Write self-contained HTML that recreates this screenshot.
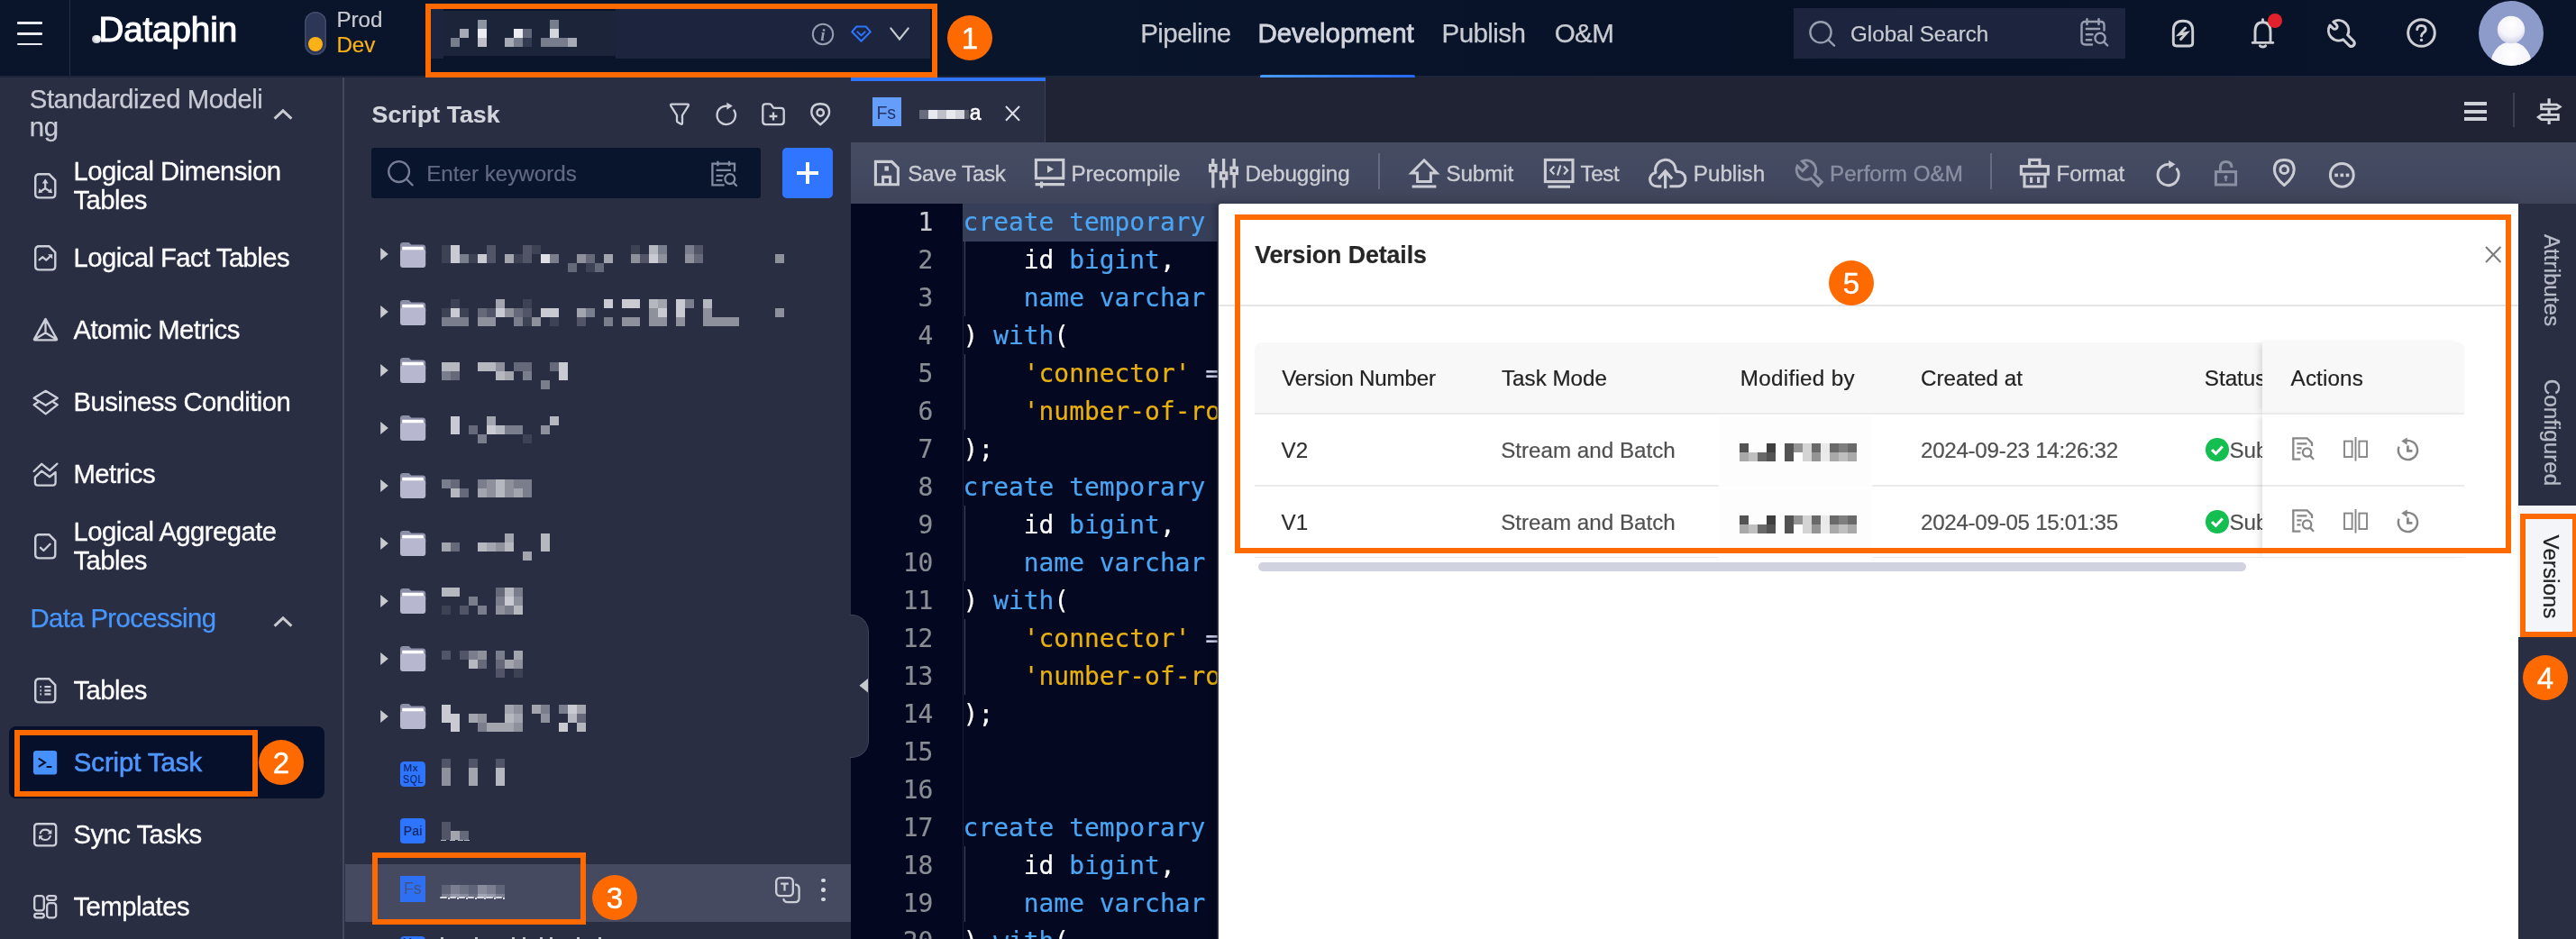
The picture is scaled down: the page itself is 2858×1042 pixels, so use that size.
<!DOCTYPE html>
<html lang="en"><head><meta charset="utf-8"><title>Dataphin - Script Task - Version Details</title>
<style>
html,body{margin:0;padding:0;}
body{width:2858px;height:1042px;overflow:hidden;position:relative;background:#2a2e43;font-family:"Liberation Sans",sans-serif;}
.t{position:absolute;white-space:nowrap;line-height:1;-webkit-text-stroke:0.2px;}
.r{position:absolute;}
.i{position:absolute;overflow:visible;}
.s{fill:none;stroke-linecap:round;stroke-linejoin:round;}
.clip{position:absolute;overflow:hidden;}
#app{position:absolute;left:0;top:0;width:2858px;height:1042px;will-change:transform;}
</style></head><body><div id="app">
<!-- header -->
<div class="r" style="left:0.0px;top:0.0px;width:2858.0px;height:85.0px;background:linear-gradient(90deg,#0a152c 0%,#09152b 40%,#071227 70%,#09142a 100%);"></div>
<div class="r" style="left:0.0px;top:84.0px;width:2858.0px;height:1.6px;background:#1c2439;"></div>
<div class="r" style="left:76.5px;top:0.0px;width:1.5px;height:85.0px;background:#232d48;"></div>
<div class="r" style="left:19.0px;top:24.2px;width:28.0px;height:2.6px;background:#e9eaf0;border-radius:1px;"></div>
<div class="r" style="left:19.0px;top:36.0px;width:28.0px;height:2.6px;background:#e9eaf0;border-radius:1px;"></div>
<div class="r" style="left:19.0px;top:47.6px;width:28.0px;height:2.6px;background:#e9eaf0;border-radius:1px;"></div>
<div class="r" style="left:102.3px;top:38.8px;width:9.4px;height:9.4px;background:radial-gradient(circle at 65% 35%,#ffffff 0%,#e4e5ea 45%,#9a9dab 100%);border-radius:50%;"></div>
<div class="t" style="left:109.4px;top:13.8px;font-size:38.6px;color:#ffffff;font-weight:normal;-webkit-text-stroke:1.1px #fff;letter-spacing:-0.1px;">Dataphin</div>
<div class="r" style="left:338.0px;top:13.0px;width:24.0px;height:47.5px;background:#2c3657;border-radius:12px;box-shadow:inset 0 0 0 1.5px #414b6b;"></div>
<div class="r" style="left:342.0px;top:41.4px;width:16.0px;height:16.0px;background:#fbb116;border-radius:50%;"></div>
<div class="t" style="left:373.4px;top:9.8px;font-size:24.2px;color:#c9cbd3;font-weight:normal;">Prod</div>
<div class="t" style="left:373.4px;top:37.6px;font-size:24.2px;color:#fbb116;font-weight:normal;">Dev</div>
<div class="r" style="left:476.0px;top:10.0px;width:556.0px;height:55.0px;background:#1c253d;"></div>
<div class="r" style="left:491.6px;top:10.0px;width:191.0px;height:2.0px;background:#0a152b;"></div>
<div class="r" style="left:491.6px;top:62.0px;width:191.0px;height:3.2px;background:#0a152b;"></div>
<div class="r" style="left:491.6px;top:12.0px;width:191.0px;height:50.0px;background:#1c2439;"></div>
<svg class="i" style="left:500.0px;top:22.0px;shape-rendering:crispEdges;" width="140" height="30" viewBox="0 0 140 30"><rect x="30" y="0" width="10.3" height="10.3" fill="rgb(143,148,162)"/><rect x="110" y="0" width="10.3" height="10.3" fill="rgb(120,125,141)"/><rect x="10" y="10" width="10.3" height="10.3" fill="rgb(166,170,182)"/><rect x="30" y="10" width="10.3" height="10.3" fill="rgb(235,236,242)"/><rect x="70" y="10" width="10.3" height="10.3" fill="rgb(235,236,242)"/><rect x="80" y="10" width="10.3" height="10.3" fill="rgb(97,103,121)"/><rect x="110" y="10" width="10.3" height="10.3" fill="rgb(212,214,222)"/><rect x="0" y="20" width="10.3" height="10.3" fill="rgb(120,125,141)"/><rect x="30" y="20" width="10.3" height="10.3" fill="rgb(189,192,202)"/><rect x="60" y="20" width="10.3" height="10.3" fill="rgb(166,170,182)"/><rect x="70" y="20" width="10.3" height="10.3" fill="rgb(120,125,141)"/><rect x="80" y="20" width="10.3" height="10.3" fill="rgb(51,59,81)"/><rect x="100" y="20" width="10.3" height="10.3" fill="rgb(120,125,141)"/><rect x="110" y="20" width="10.3" height="10.3" fill="rgb(120,125,141)"/><rect x="120" y="20" width="10.3" height="10.3" fill="rgb(120,125,141)"/><rect x="130" y="20" width="10.3" height="10.3" fill="rgb(166,170,182)"/></svg>
<svg class="i" style="left:900.0px;top:24.5px;" width="26" height="26" viewBox="0 0 26 26"><circle class="s" cx="13" cy="13" r="11.2" stroke="#989db0" stroke-width="2"/><text x="13" y="19.6" text-anchor="middle" font-family="Liberation Serif,serif" font-style="italic" font-weight="bold" font-size="19" fill="#989db0">i</text></svg>
<svg class="i" style="left:943.5px;top:27.5px;" width="23" height="19" viewBox="0 0 23 19"><path class="s" d="M6.2 1.5H16.8L21.8 7.3L11.5 17.8L1.2 7.3Z" stroke="#2b76ff" stroke-width="2"/><path class="s" d="M7.3 7.4L11.5 11.4L15.7 7.4" stroke="#2b76ff" stroke-width="2"/></svg>
<svg class="i" style="left:987.0px;top:29.5px;" width="22" height="15" viewBox="0 0 22 15"><path class="s" d="M1.3 1.3L11 13.5L20.7 1.3" stroke="#c9cbd3" stroke-width="2.1" style="stroke-linejoin:miter"/></svg>
<div class="t" style="left:1265.2px;top:22.3px;font-size:29.6px;color:#c9cbd3;font-weight:normal;letter-spacing:-0.6px;-webkit-text-stroke:0.25px #c9cbd3;">Pipeline</div>
<div class="t" style="left:1395.4px;top:22.3px;font-size:29.6px;color:#d3d5de;font-weight:normal;-webkit-text-stroke:0.8px #d3d5de;letter-spacing:-0.1px;">Development</div>
<div class="r" style="left:1398.0px;top:82.6px;width:172.0px;height:4.4px;background:linear-gradient(90deg,#4a9bff,#2468f2);border-radius:2.2px;"></div>
<div class="t" style="left:1599.5px;top:22.3px;font-size:29.6px;color:#c9cbd3;font-weight:normal;letter-spacing:-0.6px;-webkit-text-stroke:0.25px #c9cbd3;">Publish</div>
<div class="t" style="left:1724.8px;top:22.3px;font-size:29.6px;color:#c9cbd3;font-weight:normal;letter-spacing:-0.7px;-webkit-text-stroke:0.25px #c9cbd3;">O&amp;M</div>
<div class="r" style="left:1990.0px;top:9.0px;width:368.0px;height:56.0px;background:#1c253d;"></div>
<svg class="i" style="left:2006.0px;top:22.0px;" width="32" height="32" viewBox="0 0 32 32"><circle class="s" cx="14" cy="13.8" r="11.6" stroke="#989db0" stroke-width="2.4"/><path class="s" d="M22.4 22.2L29 28.6" stroke="#989db0" stroke-width="2.4"/></svg>
<div class="t" style="left:2053.0px;top:25.6px;font-size:24.2px;color:#c9cbd3;font-weight:normal;">Global Search</div>
<svg class="i" style="left:2308.0px;top:20.4px;" width="32" height="32" viewBox="0 0 32 32"><path class="s" d="M7.5 1.2V7M20.5 1.2V7" stroke="#989db0" stroke-width="2.6"/><path class="s" d="M13 29.5H5.5Q1.5 29.5 1.5 25.5V8Q1.5 4 5.5 4H22.5Q26.5 4 26.5 8V13.5" stroke="#989db0" stroke-width="2.4"/><path class="s" d="M6.8 12H21.2M6.8 18.3H13.5M6.8 24.3H12.2" stroke="#989db0" stroke-width="2.4"/><circle class="s" cx="22" cy="22.3" r="5.6" stroke="#989db0" stroke-width="2.4"/><path class="s" d="M26.3 26.7L30.2 30.5" stroke="#989db0" stroke-width="2.4"/></svg>
<svg class="i" style="left:2410.0px;top:21.8px;" width="24" height="30.4" viewBox="0 0 24 30.4"><path class="s" d="M1.3 25.6V12Q1.3 1.3 12 1.3Q22.7 1.3 22.7 12V25.6Q22.7 29 19.3 29H4.7Q1.3 29 1.3 25.6Z" stroke="#cecfd5" stroke-width="2.9"/><path class="s" d="M14.6 9L7.8 16.2L16 14.6L9.6 21.6" stroke="#cecfd5" stroke-width="2.9" style="stroke-linejoin:miter"/></svg>
<svg class="i" style="left:2497.0px;top:20.0px;" width="27" height="34" viewBox="0 0 27 34"><path class="s" d="M2.2 27.4H24.8M5 27V14.8Q5 4.8 13.5 4.8Q22 4.8 22 14.8V27M13.5 4.4V1.6M10.4 30.8Q13.5 33.4 16.6 30.8" stroke="#cecfd5" stroke-width="2.9"/></svg>
<div class="r" style="left:2516.0px;top:15.0px;width:16.0px;height:16.0px;background:#e2222b;border-radius:50%;"></div>
<svg class="i" style="left:2581.0px;top:20.0px;" width="35" height="34" viewBox="0 0 35 34"><path class="s" d="M7.8 4.2 L11.3 7.6 A2.7 2.7 0 0 1 7.4 11.5 L4.0 8.0 A11.2 11.2 0 0 0 18.6 23.8 L25.6 30.7 A3.5 3.5 0 0 0 30.5 25.8 L23.6 18.8 A11.2 11.2 0 0 0 7.8 4.2Z" stroke="#cecfd5" stroke-width="3"/></svg>
<svg class="i" style="left:2669.5px;top:20.2px;" width="33" height="33" viewBox="0 0 33 33"><circle class="s" cx="16.5" cy="16.5" r="14.8" stroke="#cecfd5" stroke-width="3"/><path class="s" d="M11.7 12.8Q11.9 8.4 16.5 8.4Q21.2 8.6 21.2 12.6Q21.2 15 18.6 16.4Q16.5 17.6 16.5 20" stroke="#cecfd5" stroke-width="2.9"/><circle cx="16.5" cy="24.4" r="1.7" fill="#cecfd5"/></svg>
<svg class="i" style="left:2750.0px;top:0.7px;" width="72" height="72" viewBox="0 0 72 72"><defs><clipPath id="avc"><circle cx="36" cy="36" r="36"/></clipPath><radialGradient id="avg" cx="50%" cy="30%" r="75%"><stop offset="0" stop-color="#ffffff"/><stop offset="0.6" stop-color="#f4f4fa"/><stop offset="1" stop-color="#c9cbe2"/></radialGradient></defs><circle cx="36" cy="36" r="36" fill="#8d9bcb"/><g clip-path="url(#avc)"><ellipse cx="36" cy="70" rx="22.5" ry="24.5" fill="url(#avg)"/><circle cx="36" cy="32" r="15.2" fill="url(#avg)"/></g></svg>
<!-- sidebar -->
<div class="r" style="left:0.0px;top:85.5px;width:381.0px;height:957.0px;background:#2a2e43;"></div>
<div class="r" style="left:380.2px;top:86.0px;width:1.8px;height:957.0px;background:#434860;"></div>
<div class="t" style="left:32.8px;top:94.7px;font-size:29.3px;color:#c8cad4;font-weight:normal;letter-spacing:-0.45px;-webkit-text-stroke:0.25px #c8cad4;">Standardized Modeli</div>
<div class="t" style="left:32.8px;top:126.1px;font-size:29.3px;color:#c8cad4;font-weight:normal;letter-spacing:-0.45px;-webkit-text-stroke:0.25px #c8cad4;">ng</div>
<svg class="i" style="left:303.2px;top:120.6px;" width="22" height="12.5" viewBox="0 0 22 12.5"><path class="s" d="M1.6 10.6L11 1.9L20.4 10.6" stroke="#c9cad0" stroke-width="3" style="stroke-linecap:butt;stroke-linejoin:miter"/></svg>
<div class="t" style="left:33.4px;top:670.6px;font-size:29.3px;color:#4696ff;font-weight:normal;letter-spacing:-0.6px;-webkit-text-stroke:0.25px #4696ff;">Data Processing</div>
<svg class="i" style="left:303.2px;top:683.6px;" width="22" height="12.5" viewBox="0 0 22 12.5"><path class="s" d="M1.6 10.6L11 1.9L20.4 10.6" stroke="#c9cad0" stroke-width="3" style="stroke-linecap:butt;stroke-linejoin:miter"/></svg>
<svg class="i" style="left:37.8px;top:191.7px;" width="24.5" height="28.6" viewBox="0 0 24.5 28.6"><path class="s" d="M1.2 5.4Q1.2 1.2 5.4 1.2H16.4L23.3 8.1V23.2Q23.3 27.4 19.1 27.4H5.4Q1.2 27.4 1.2 23.2Z" stroke="#cdcfd8" stroke-width="2.4"/><path class="s" d="M12.2 8.6V17L6.6 20.6M12.2 17L17.8 20.6" stroke="#cdcfd8" stroke-width="2.1"/><path d="M12.2 6.6L15.6 11.4H8.8Z M4.4 22.2L5.6 16.9L9.4 21.6Z M20 22.2L18.8 16.9L15 21.6Z" fill="#cdcfd8"/></svg>
<div class="t" style="left:81.5px;top:174.7px;font-size:29.3px;color:#ffffff;font-weight:normal;letter-spacing:-0.56px;-webkit-text-stroke:0.3px #ffffff;">Logical Dimension</div>
<div class="t" style="left:81.5px;top:206.7px;font-size:29.3px;color:#ffffff;font-weight:normal;letter-spacing:-0.56px;-webkit-text-stroke:0.3px #ffffff;">Tables</div>
<svg class="i" style="left:37.8px;top:271.8px;" width="24.5" height="28.6" viewBox="0 0 24.5 28.6"><path class="s" d="M1.2 5.4Q1.2 1.2 5.4 1.2H16.4L23.3 8.1V23.2Q23.3 27.4 19.1 27.4H5.4Q1.2 27.4 1.2 23.2Z" stroke="#cdcfd8" stroke-width="2.4"/><path class="s" d="M5.6 16.4L9.4 13.2L13.2 16.6L18 12.2" stroke="#cdcfd8" stroke-width="2.2"/><path d="M15 10.2H20.2V15.4Z" fill="#cdcfd8"/></svg>
<div class="t" style="left:81.5px;top:271.1px;font-size:29.3px;color:#ffffff;font-weight:normal;letter-spacing:-0.56px;-webkit-text-stroke:0.3px #ffffff;">Logical Fact Tables</div>
<svg class="i" style="left:35.5px;top:352.0px;" width="29" height="27" viewBox="0 0 29 27"><path class="s" d="M14.5 1.9L27 24.4Q27.4 25.4 26.2 25.4H2.8Q1.6 25.4 2 24.4ZM14.5 2.4V17.2L2.6 24.6M14.5 17.2L26.4 24.6" stroke="#cdcfd8" stroke-width="2.3"/></svg>
<div class="t" style="left:81.5px;top:351.1px;font-size:29.3px;color:#ffffff;font-weight:normal;letter-spacing:-0.56px;-webkit-text-stroke:0.3px #ffffff;">Atomic Metrics</div>
<svg class="i" style="left:35.5px;top:431.5px;" width="29.4" height="29.4" viewBox="0 0 29.4 29.4"><path class="s" d="M14.7 1.8L27.8 9.8L14.7 17.8L1.6 9.8ZM5.8 14.6L1.6 17.2L14.7 27.4L27.8 17.2L23.6 14.6" stroke="#cdcfd8" stroke-width="2.3"/></svg>
<div class="t" style="left:81.5px;top:431.1px;font-size:29.3px;color:#ffffff;font-weight:normal;letter-spacing:-0.56px;-webkit-text-stroke:0.3px #ffffff;">Business Condition</div>
<svg class="i" style="left:35.5px;top:512.5px;" width="29" height="27.5" viewBox="0 0 29 27.5"><path class="s" d="M1.6 10L10.2 1.8L19.2 9.2L27.4 1.6" stroke="#cdcfd8" stroke-width="2.3"/><path class="s" d="M2.9 16.6L10.2 9.6L19.2 16.2L25.6 11V22.6Q25.6 25.6 22.6 25.6H5.9Q2.9 25.6 2.9 22.6Z" stroke="#cdcfd8" stroke-width="2.3"/></svg>
<div class="t" style="left:81.5px;top:511.1px;font-size:29.3px;color:#ffffff;font-weight:normal;letter-spacing:-0.56px;-webkit-text-stroke:0.3px #ffffff;">Metrics</div>
<svg class="i" style="left:37.8px;top:591.8px;" width="24.5" height="28.6" viewBox="0 0 24.5 28.6"><path class="s" d="M1.2 5.4Q1.2 1.2 5.4 1.2H16.4L23.3 8.1V23.2Q23.3 27.4 19.1 27.4H5.4Q1.2 27.4 1.2 23.2Z" stroke="#cdcfd8" stroke-width="2.4"/><path class="s" d="M7 15.8L10.4 19L17.6 11.8" stroke="#cdcfd8" stroke-width="2.3"/></svg>
<div class="t" style="left:81.5px;top:574.9px;font-size:29.3px;color:#ffffff;font-weight:normal;letter-spacing:-0.56px;-webkit-text-stroke:0.3px #ffffff;">Logical Aggregate</div>
<div class="t" style="left:81.5px;top:606.9px;font-size:29.3px;color:#ffffff;font-weight:normal;letter-spacing:-0.56px;-webkit-text-stroke:0.3px #ffffff;">Tables</div>
<svg class="i" style="left:37.8px;top:751.8px;" width="24.5" height="28.6" viewBox="0 0 24.5 28.6"><path class="s" d="M1.2 5.4Q1.2 1.2 5.4 1.2H16.4L23.3 8.1V23.2Q23.3 27.4 19.1 27.4H5.4Q1.2 27.4 1.2 23.2Z" stroke="#cdcfd8" stroke-width="2.4"/><path class="s" d="M6.4 10.2H7.9M6.4 14.3H7.9M6.4 18.4H7.9M11.4 10.2H18.4M11.4 14.3H18.4M11.4 18.4H18.4" stroke="#cdcfd8" stroke-width="2.2" style="stroke-linecap:butt"/></svg>
<div class="t" style="left:81.5px;top:751.1px;font-size:29.3px;color:#ffffff;font-weight:normal;letter-spacing:-0.56px;-webkit-text-stroke:0.3px #ffffff;">Tables</div>
<div class="r" style="left:10.2px;top:806.0px;width:349.8px;height:79.6px;background:#07102a;border-radius:8px;"></div>
<svg class="i" style="left:37.0px;top:832.9px;" width="26.2" height="26.6" viewBox="0 0 26.2 26.6"><rect x="0" y="0" width="26.2" height="26.6" rx="3.4" fill="#4691ff"/><path class="s" d="M5.8 8.6L13 13.2L5.8 17.8M14.6 18H20.4" stroke="#07102a" stroke-width="2.1" style="stroke-linejoin:miter;stroke-linecap:butt"/></svg>
<div class="t" style="left:81.8px;top:831.1px;font-size:29.3px;color:#4d96ff;font-weight:normal;-webkit-text-stroke:0.65px #4d96ff;letter-spacing:-0.05px;">Script Task</div>
<svg class="i" style="left:36.9px;top:912.7px;" width="26.4" height="26.6" viewBox="0 0 26.4 26.6"><rect class="s" x="1.2" y="1.2" width="24" height="24.2" rx="3.2" stroke="#cdcfd8" stroke-width="2.4"/><path class="s" d="M7.6 11.6Q9 7.6 13.2 7.6Q16.6 7.6 18.4 10.4M18.8 15Q17.4 19 13.2 19Q9.8 19 8 16.2" stroke="#cdcfd8" stroke-width="2.1"/><path d="M20.4 7.6V12.4H15.6Z M6 19V14.2H10.8Z" fill="#cdcfd8"/></svg>
<div class="t" style="left:81.5px;top:911.1px;font-size:29.3px;color:#ffffff;font-weight:normal;letter-spacing:-0.56px;-webkit-text-stroke:0.3px #ffffff;">Sync Tasks</div>
<svg class="i" style="left:36.9px;top:992.8px;" width="26.4" height="26.6" viewBox="0 0 26.4 26.6"><rect class="s" x="1.2" y="1.2" width="10.6" height="16.2" rx="3" stroke="#cdcfd8" stroke-width="2.3"/><rect class="s" x="1.2" y="20.8" width="10.6" height="4.6" rx="2.3" stroke="#cdcfd8" stroke-width="2.3"/><rect class="s" x="15.2" y="1.2" width="10" height="4.6" rx="2.3" stroke="#cdcfd8" stroke-width="2.3"/><rect class="s" x="15.2" y="9.2" width="10" height="16.2" rx="3" stroke="#cdcfd8" stroke-width="2.3"/></svg>
<div class="t" style="left:81.5px;top:991.3px;font-size:29.3px;color:#ffffff;font-weight:normal;letter-spacing:-0.56px;-webkit-text-stroke:0.3px #ffffff;">Templates</div>
<!-- script task tree panel -->
<div class="t" style="left:412.6px;top:114.3px;font-size:26.7px;color:#d3d5dd;font-weight:bold;">Script Task</div>
<svg class="i" style="left:742.0px;top:113.6px;" width="24" height="25.6" viewBox="0 0 24 25.6"><path class="s" d="M3.4 1.6H20.6Q22.6 1.6 21.6 3.6L15 14V22.6Q15 24.6 13.2 23.6L9.8 21.6Q9 21.2 9 20.2V14L2.4 3.6Q1.4 1.6 3.4 1.6Z" stroke="#cdcfd8" stroke-width="2.3"/></svg>
<svg class="i" style="left:794.0px;top:113.0px;" width="24" height="27" viewBox="0 0 24 27"><path class="s" d="M15.2 5.2A10.2 10.2 0 1 0 20.4 9.4" stroke="#cdcfd8" stroke-width="2.3"/><path d="M12.4 0.8L18.8 4.6L12.4 8.8Z" fill="#cdcfd8"/></svg>
<svg class="i" style="left:845.0px;top:113.8px;" width="26" height="25.4" viewBox="0 0 26 25.4"><path class="s" d="M1.3 4.6Q1.3 1.3 4.6 1.3H8.6Q10.2 1.3 11 2.6L12.4 4.8Q13 5.8 14.4 5.8H21.4Q24.7 5.8 24.7 9.1V20.8Q24.7 24.1 21.4 24.1H4.6Q1.3 24.1 1.3 20.8Z" stroke="#cdcfd8" stroke-width="2.3"/><path class="s" d="M13 10.6V19.4M8.6 15H17.4" stroke="#cdcfd8" stroke-width="2.3" style="stroke-linecap:butt"/></svg>
<svg class="i" style="left:898.7px;top:113.8px;" width="22.4" height="25.6" viewBox="0 0 22.4 25.6"><path class="s" d="M11.2 24.2Q1.3 16.6 1.3 10.8Q1.3 1.3 11.2 1.3Q21.1 1.3 21.1 10.8Q21.1 16.6 11.2 24.2Z" stroke="#cdcfd8" stroke-width="2.4"/><circle class="s" cx="11.2" cy="11" r="3.7" stroke="#cdcfd8" stroke-width="2.4"/></svg>
<div class="r" style="left:412.0px;top:164.0px;width:432.0px;height:56.0px;background:#09152d;border-radius:3px;"></div>
<svg class="i" style="left:429.0px;top:176.5px;" width="32" height="32" viewBox="0 0 32 32"><circle class="s" cx="13.6" cy="13.6" r="11.4" stroke="#787e94" stroke-width="2.3"/><path class="s" d="M22 21.8L28.6 28.4" stroke="#787e94" stroke-width="2.3"/></svg>
<div class="t" style="left:473.2px;top:181.0px;font-size:24.2px;color:#626a82;font-weight:normal;">Enter keywords</div>
<svg class="i" style="left:789.4px;top:177.8px;" width="29" height="29" viewBox="0 0 29 29"><path class="s" d="M7.4 0.8V6.2M20 0.8V6.2" stroke="#828aa0" stroke-width="2.3" style="stroke-linecap:butt"/><path class="s" d="M14.6 27.4H1.4V3.6H26V12.6" stroke="#828aa0" stroke-width="2.3" style="stroke-linejoin:miter;stroke-linecap:butt"/><path class="s" d="M5.6 10.8H22M5.6 16.8H13.4M5.6 22.2H12.4" stroke="#828aa0" stroke-width="2.3" style="stroke-linecap:butt"/><circle class="s" cx="20.8" cy="20.6" r="5.4" stroke="#828aa0" stroke-width="2.3"/><path class="s" d="M24.8 24.8L28 28" stroke="#828aa0" stroke-width="2.3"/></svg>
<div class="r" style="left:868.0px;top:164.0px;width:56.0px;height:56.0px;background:#2f75ff;border-radius:5px;"></div>
<div class="r" style="left:884.0px;top:189.7px;width:24.4px;height:4.6px;background:#ffffff;"></div>
<div class="r" style="left:893.9px;top:179.8px;width:4.6px;height:24.4px;background:#ffffff;"></div>
<svg class="i" style="left:421.6px;top:275.4px;" width="9" height="14" viewBox="0 0 9 14"><path d="M0.2 0L8.8 7L0.2 14Z" fill="#c9cad0"/></svg>
<svg class="i" style="left:443.8px;top:268.8px;" width="28.2" height="28" viewBox="0 0 28.2 28"><path d="M0 3.2Q0 0 3.2 0H8.6Q10.2 0 11 1.2L12.2 2.6H25Q28.2 2.6 28.2 5.8V12H0Z" fill="#8e8fa8"/><path d="M2.2 4.8H25.6L26.4 9H2.2Z" fill="#ffffff"/><path d="M0 10.6Q0 8.2 2.4 8.2H25.8Q28.2 8.2 28.2 10.6V25Q28.2 28 25.2 28H3Q0 28 0 25Z" fill="#b7b8d0"/></svg>
<svg class="i" style="left:421.6px;top:339.4px;" width="9" height="14" viewBox="0 0 9 14"><path d="M0.2 0L8.8 7L0.2 14Z" fill="#c9cad0"/></svg>
<svg class="i" style="left:443.8px;top:332.8px;" width="28.2" height="28" viewBox="0 0 28.2 28"><path d="M0 3.2Q0 0 3.2 0H8.6Q10.2 0 11 1.2L12.2 2.6H25Q28.2 2.6 28.2 5.8V12H0Z" fill="#8e8fa8"/><path d="M2.2 4.8H25.6L26.4 9H2.2Z" fill="#ffffff"/><path d="M0 10.6Q0 8.2 2.4 8.2H25.8Q28.2 8.2 28.2 10.6V25Q28.2 28 25.2 28H3Q0 28 0 25Z" fill="#b7b8d0"/></svg>
<svg class="i" style="left:421.6px;top:403.5px;" width="9" height="14" viewBox="0 0 9 14"><path d="M0.2 0L8.8 7L0.2 14Z" fill="#c9cad0"/></svg>
<svg class="i" style="left:443.8px;top:396.9px;" width="28.2" height="28" viewBox="0 0 28.2 28"><path d="M0 3.2Q0 0 3.2 0H8.6Q10.2 0 11 1.2L12.2 2.6H25Q28.2 2.6 28.2 5.8V12H0Z" fill="#8e8fa8"/><path d="M2.2 4.8H25.6L26.4 9H2.2Z" fill="#ffffff"/><path d="M0 10.6Q0 8.2 2.4 8.2H25.8Q28.2 8.2 28.2 10.6V25Q28.2 28 25.2 28H3Q0 28 0 25Z" fill="#b7b8d0"/></svg>
<svg class="i" style="left:421.6px;top:467.5px;" width="9" height="14" viewBox="0 0 9 14"><path d="M0.2 0L8.8 7L0.2 14Z" fill="#c9cad0"/></svg>
<svg class="i" style="left:443.8px;top:460.9px;" width="28.2" height="28" viewBox="0 0 28.2 28"><path d="M0 3.2Q0 0 3.2 0H8.6Q10.2 0 11 1.2L12.2 2.6H25Q28.2 2.6 28.2 5.8V12H0Z" fill="#8e8fa8"/><path d="M2.2 4.8H25.6L26.4 9H2.2Z" fill="#ffffff"/><path d="M0 10.6Q0 8.2 2.4 8.2H25.8Q28.2 8.2 28.2 10.6V25Q28.2 28 25.2 28H3Q0 28 0 25Z" fill="#b7b8d0"/></svg>
<svg class="i" style="left:421.6px;top:531.5px;" width="9" height="14" viewBox="0 0 9 14"><path d="M0.2 0L8.8 7L0.2 14Z" fill="#c9cad0"/></svg>
<svg class="i" style="left:443.8px;top:524.9px;" width="28.2" height="28" viewBox="0 0 28.2 28"><path d="M0 3.2Q0 0 3.2 0H8.6Q10.2 0 11 1.2L12.2 2.6H25Q28.2 2.6 28.2 5.8V12H0Z" fill="#8e8fa8"/><path d="M2.2 4.8H25.6L26.4 9H2.2Z" fill="#ffffff"/><path d="M0 10.6Q0 8.2 2.4 8.2H25.8Q28.2 8.2 28.2 10.6V25Q28.2 28 25.2 28H3Q0 28 0 25Z" fill="#b7b8d0"/></svg>
<svg class="i" style="left:421.6px;top:595.5px;" width="9" height="14" viewBox="0 0 9 14"><path d="M0.2 0L8.8 7L0.2 14Z" fill="#c9cad0"/></svg>
<svg class="i" style="left:443.8px;top:588.9px;" width="28.2" height="28" viewBox="0 0 28.2 28"><path d="M0 3.2Q0 0 3.2 0H8.6Q10.2 0 11 1.2L12.2 2.6H25Q28.2 2.6 28.2 5.8V12H0Z" fill="#8e8fa8"/><path d="M2.2 4.8H25.6L26.4 9H2.2Z" fill="#ffffff"/><path d="M0 10.6Q0 8.2 2.4 8.2H25.8Q28.2 8.2 28.2 10.6V25Q28.2 28 25.2 28H3Q0 28 0 25Z" fill="#b7b8d0"/></svg>
<svg class="i" style="left:421.6px;top:659.6px;" width="9" height="14" viewBox="0 0 9 14"><path d="M0.2 0L8.8 7L0.2 14Z" fill="#c9cad0"/></svg>
<svg class="i" style="left:443.8px;top:653.0px;" width="28.2" height="28" viewBox="0 0 28.2 28"><path d="M0 3.2Q0 0 3.2 0H8.6Q10.2 0 11 1.2L12.2 2.6H25Q28.2 2.6 28.2 5.8V12H0Z" fill="#8e8fa8"/><path d="M2.2 4.8H25.6L26.4 9H2.2Z" fill="#ffffff"/><path d="M0 10.6Q0 8.2 2.4 8.2H25.8Q28.2 8.2 28.2 10.6V25Q28.2 28 25.2 28H3Q0 28 0 25Z" fill="#b7b8d0"/></svg>
<svg class="i" style="left:421.6px;top:723.6px;" width="9" height="14" viewBox="0 0 9 14"><path d="M0.2 0L8.8 7L0.2 14Z" fill="#c9cad0"/></svg>
<svg class="i" style="left:443.8px;top:717.0px;" width="28.2" height="28" viewBox="0 0 28.2 28"><path d="M0 3.2Q0 0 3.2 0H8.6Q10.2 0 11 1.2L12.2 2.6H25Q28.2 2.6 28.2 5.8V12H0Z" fill="#8e8fa8"/><path d="M2.2 4.8H25.6L26.4 9H2.2Z" fill="#ffffff"/><path d="M0 10.6Q0 8.2 2.4 8.2H25.8Q28.2 8.2 28.2 10.6V25Q28.2 28 25.2 28H3Q0 28 0 25Z" fill="#b7b8d0"/></svg>
<svg class="i" style="left:421.6px;top:787.6px;" width="9" height="14" viewBox="0 0 9 14"><path d="M0.2 0L8.8 7L0.2 14Z" fill="#c9cad0"/></svg>
<svg class="i" style="left:443.8px;top:781.0px;" width="28.2" height="28" viewBox="0 0 28.2 28"><path d="M0 3.2Q0 0 3.2 0H8.6Q10.2 0 11 1.2L12.2 2.6H25Q28.2 2.6 28.2 5.8V12H0Z" fill="#8e8fa8"/><path d="M2.2 4.8H25.6L26.4 9H2.2Z" fill="#ffffff"/><path d="M0 10.6Q0 8.2 2.4 8.2H25.8Q28.2 8.2 28.2 10.6V25Q28.2 28 25.2 28H3Q0 28 0 25Z" fill="#b7b8d0"/></svg>
<div class="r" style="left:383.0px;top:959.0px;width:561.0px;height:63.8px;background:#454a60;"></div>
<div class="r" style="left:444.2px;top:845.1px;width:28.2px;height:28.4px;background:#2d75ff;border-radius:4.5px;"><span class="t" style="left:3.2px;top:2.2px;font-size:11.5px;color:#10286a;letter-spacing:0.8px;">Mx</span><span class="t" style="left:2.4px;top:13.4px;font-size:13.5px;color:#10286a;transform:scaleX(0.78);transform-origin:0 0;letter-spacing:0.8px;">SQL</span></div>
<div class="r" style="left:444.2px;top:908.1px;width:28.2px;height:28.4px;background:#2d75ff;border-radius:4px;"><span class="t" style="left:3.6px;top:7.4px;font-size:14px;color:#14265a;letter-spacing:0.2px;">Pai</span></div>
<div class="r" style="left:444.2px;top:972.3px;width:28.2px;height:28.4px;background:#2e70f3;"><span class="t" style="left:3.9px;top:5.3px;font-size:17.6px;color:#46527e;-webkit-text-stroke:0;">Fs</span></div>
<div class="r" style="left:444.2px;top:1038.8px;width:28.2px;height:28.4px;background:#2d75ff;border-radius:4.5px;"><span class="t" style="left:2.6px;top:0.8px;font-size:12.5px;color:#0d1d4a;letter-spacing:0.6px;">Mx</span></div>
<svg class="i" style="left:490.0px;top:272.0px;shape-rendering:crispEdges;" width="380" height="30" viewBox="0 0 380 30"><rect x="0" y="0" width="10.3" height="10.3" fill="rgb(62,66,85)"/><rect x="10" y="0" width="10.3" height="10.3" fill="rgb(202,203,210)"/><rect x="50" y="0" width="10.3" height="10.3" fill="rgb(82,85,103)"/><rect x="90" y="0" width="10.3" height="10.3" fill="rgb(82,85,103)"/><rect x="100" y="0" width="10.3" height="10.3" fill="rgb(62,66,85)"/><rect x="210" y="0" width="10.3" height="10.3" fill="rgb(62,66,85)"/><rect x="230" y="0" width="10.3" height="10.3" fill="rgb(182,184,192)"/><rect x="240" y="0" width="10.3" height="10.3" fill="rgb(122,125,139)"/><rect x="270" y="0" width="10.3" height="10.3" fill="rgb(122,125,139)"/><rect x="280" y="0" width="10.3" height="10.3" fill="rgb(82,85,103)"/><rect x="0" y="10" width="10.3" height="10.3" fill="rgb(62,66,85)"/><rect x="10" y="10" width="10.3" height="10.3" fill="rgb(202,203,210)"/><rect x="20" y="10" width="10.3" height="10.3" fill="rgb(122,125,139)"/><rect x="30" y="10" width="10.3" height="10.3" fill="rgb(62,66,85)"/><rect x="40" y="10" width="10.3" height="10.3" fill="rgb(202,203,210)"/><rect x="50" y="10" width="10.3" height="10.3" fill="rgb(82,85,103)"/><rect x="70" y="10" width="10.3" height="10.3" fill="rgb(162,164,174)"/><rect x="80" y="10" width="10.3" height="10.3" fill="rgb(62,66,85)"/><rect x="90" y="10" width="10.3" height="10.3" fill="rgb(82,85,103)"/><rect x="110" y="10" width="10.3" height="10.3" fill="rgb(222,223,228)"/><rect x="120" y="10" width="10.3" height="10.3" fill="rgb(122,125,139)"/><rect x="150" y="10" width="10.3" height="10.3" fill="rgb(142,144,156)"/><rect x="160" y="10" width="10.3" height="10.3" fill="rgb(102,105,121)"/><rect x="180" y="10" width="10.3" height="10.3" fill="rgb(162,164,174)"/><rect x="210" y="10" width="10.3" height="10.3" fill="rgb(142,144,156)"/><rect x="220" y="10" width="10.3" height="10.3" fill="rgb(82,85,103)"/><rect x="230" y="10" width="10.3" height="10.3" fill="rgb(202,203,210)"/><rect x="240" y="10" width="10.3" height="10.3" fill="rgb(142,144,156)"/><rect x="270" y="10" width="10.3" height="10.3" fill="rgb(142,144,156)"/><rect x="280" y="10" width="10.3" height="10.3" fill="rgb(102,105,121)"/><rect x="370" y="10" width="10.3" height="10.3" fill="rgb(142,144,156)"/><rect x="140" y="20" width="10.3" height="10.3" fill="rgb(102,105,121)"/><rect x="160" y="20" width="10.3" height="10.3" fill="rgb(62,66,85)"/><rect x="170" y="20" width="10.3" height="10.3" fill="rgb(102,105,121)"/></svg>
<svg class="i" style="left:490.0px;top:332.0px;shape-rendering:crispEdges;" width="380" height="30" viewBox="0 0 380 30"><rect x="10" y="0" width="10.3" height="10.3" fill="rgb(62,66,85)"/><rect x="60" y="0" width="10.3" height="10.3" fill="rgb(162,164,174)"/><rect x="90" y="0" width="10.3" height="10.3" fill="rgb(62,66,85)"/><rect x="180" y="0" width="10.3" height="10.3" fill="rgb(202,203,210)"/><rect x="200" y="0" width="10.3" height="10.3" fill="rgb(202,203,210)"/><rect x="210" y="0" width="10.3" height="10.3" fill="rgb(202,203,210)"/><rect x="230" y="0" width="10.3" height="10.3" fill="rgb(182,184,192)"/><rect x="240" y="0" width="10.3" height="10.3" fill="rgb(162,164,174)"/><rect x="260" y="0" width="10.3" height="10.3" fill="rgb(202,203,210)"/><rect x="270" y="0" width="10.3" height="10.3" fill="rgb(122,125,139)"/><rect x="290" y="0" width="10.3" height="10.3" fill="rgb(182,184,192)"/><rect x="0" y="10" width="10.3" height="10.3" fill="rgb(62,66,85)"/><rect x="10" y="10" width="10.3" height="10.3" fill="rgb(202,203,210)"/><rect x="20" y="10" width="10.3" height="10.3" fill="rgb(62,66,85)"/><rect x="40" y="10" width="10.3" height="10.3" fill="rgb(102,105,121)"/><rect x="50" y="10" width="10.3" height="10.3" fill="rgb(82,85,103)"/><rect x="60" y="10" width="10.3" height="10.3" fill="rgb(202,203,210)"/><rect x="70" y="10" width="10.3" height="10.3" fill="rgb(142,144,156)"/><rect x="80" y="10" width="10.3" height="10.3" fill="rgb(102,105,121)"/><rect x="90" y="10" width="10.3" height="10.3" fill="rgb(82,85,103)"/><rect x="110" y="10" width="10.3" height="10.3" fill="rgb(202,203,210)"/><rect x="120" y="10" width="10.3" height="10.3" fill="rgb(202,203,210)"/><rect x="150" y="10" width="10.3" height="10.3" fill="rgb(162,164,174)"/><rect x="160" y="10" width="10.3" height="10.3" fill="rgb(122,125,139)"/><rect x="230" y="10" width="10.3" height="10.3" fill="rgb(142,144,156)"/><rect x="240" y="10" width="10.3" height="10.3" fill="rgb(202,203,210)"/><rect x="260" y="10" width="10.3" height="10.3" fill="rgb(202,203,210)"/><rect x="290" y="10" width="10.3" height="10.3" fill="rgb(142,144,156)"/><rect x="370" y="10" width="10.3" height="10.3" fill="rgb(142,144,156)"/><rect x="0" y="20" width="10.3" height="10.3" fill="rgb(122,125,139)"/><rect x="10" y="20" width="10.3" height="10.3" fill="rgb(122,125,139)"/><rect x="20" y="20" width="10.3" height="10.3" fill="rgb(122,125,139)"/><rect x="40" y="20" width="10.3" height="10.3" fill="rgb(142,144,156)"/><rect x="50" y="20" width="10.3" height="10.3" fill="rgb(142,144,156)"/><rect x="80" y="20" width="10.3" height="10.3" fill="rgb(122,125,139)"/><rect x="90" y="20" width="10.3" height="10.3" fill="rgb(62,66,85)"/><rect x="100" y="20" width="10.3" height="10.3" fill="rgb(142,144,156)"/><rect x="120" y="20" width="10.3" height="10.3" fill="rgb(62,66,85)"/><rect x="150" y="20" width="10.3" height="10.3" fill="rgb(82,85,103)"/><rect x="180" y="20" width="10.3" height="10.3" fill="rgb(122,125,139)"/><rect x="200" y="20" width="10.3" height="10.3" fill="rgb(142,144,156)"/><rect x="210" y="20" width="10.3" height="10.3" fill="rgb(142,144,156)"/><rect x="230" y="20" width="10.3" height="10.3" fill="rgb(142,144,156)"/><rect x="240" y="20" width="10.3" height="10.3" fill="rgb(142,144,156)"/><rect x="260" y="20" width="10.3" height="10.3" fill="rgb(142,144,156)"/><rect x="290" y="20" width="10.3" height="10.3" fill="rgb(142,144,156)"/><rect x="300" y="20" width="10.3" height="10.3" fill="rgb(142,144,156)"/><rect x="310" y="20" width="10.3" height="10.3" fill="rgb(142,144,156)"/><rect x="320" y="20" width="10.3" height="10.3" fill="rgb(142,144,156)"/></svg>
<svg class="i" style="left:490.0px;top:402.0px;shape-rendering:crispEdges;" width="140" height="30" viewBox="0 0 140 30"><rect x="0" y="0" width="10.3" height="10.3" fill="rgb(182,184,192)"/><rect x="10" y="0" width="10.3" height="10.3" fill="rgb(182,184,192)"/><rect x="40" y="0" width="10.3" height="10.3" fill="rgb(182,184,192)"/><rect x="50" y="0" width="10.3" height="10.3" fill="rgb(182,184,192)"/><rect x="60" y="0" width="10.3" height="10.3" fill="rgb(142,144,156)"/><rect x="80" y="0" width="10.3" height="10.3" fill="rgb(102,105,121)"/><rect x="90" y="0" width="10.3" height="10.3" fill="rgb(102,105,121)"/><rect x="120" y="0" width="10.3" height="10.3" fill="rgb(102,105,121)"/><rect x="130" y="0" width="10.3" height="10.3" fill="rgb(202,203,210)"/><rect x="0" y="10" width="10.3" height="10.3" fill="rgb(122,125,139)"/><rect x="10" y="10" width="10.3" height="10.3" fill="rgb(102,105,121)"/><rect x="60" y="10" width="10.3" height="10.3" fill="rgb(182,184,192)"/><rect x="70" y="10" width="10.3" height="10.3" fill="rgb(162,164,174)"/><rect x="90" y="10" width="10.3" height="10.3" fill="rgb(122,125,139)"/><rect x="130" y="10" width="10.3" height="10.3" fill="rgb(202,203,210)"/><rect x="110" y="20" width="10.3" height="10.3" fill="rgb(122,125,139)"/></svg>
<svg class="i" style="left:490.0px;top:462.0px;shape-rendering:crispEdges;" width="130" height="30" viewBox="0 0 130 30"><rect x="10" y="0" width="10.3" height="10.3" fill="rgb(202,203,210)"/><rect x="50" y="0" width="10.3" height="10.3" fill="rgb(162,164,174)"/><rect x="120" y="0" width="10.3" height="10.3" fill="rgb(182,184,192)"/><rect x="10" y="10" width="10.3" height="10.3" fill="rgb(202,203,210)"/><rect x="30" y="10" width="10.3" height="10.3" fill="rgb(102,105,121)"/><rect x="50" y="10" width="10.3" height="10.3" fill="rgb(202,203,210)"/><rect x="60" y="10" width="10.3" height="10.3" fill="rgb(182,184,192)"/><rect x="70" y="10" width="10.3" height="10.3" fill="rgb(122,125,139)"/><rect x="80" y="10" width="10.3" height="10.3" fill="rgb(122,125,139)"/><rect x="110" y="10" width="10.3" height="10.3" fill="rgb(142,144,156)"/><rect x="40" y="20" width="10.3" height="10.3" fill="rgb(122,125,139)"/><rect x="90" y="20" width="10.3" height="10.3" fill="rgb(62,66,85)"/></svg>
<svg class="i" style="left:490.0px;top:532.0px;shape-rendering:crispEdges;" width="100" height="20" viewBox="0 0 100 20"><rect x="0" y="0" width="10.3" height="10.3" fill="rgb(122,125,139)"/><rect x="10" y="0" width="10.3" height="10.3" fill="rgb(102,105,121)"/><rect x="40" y="0" width="10.3" height="10.3" fill="rgb(122,125,139)"/><rect x="50" y="0" width="10.3" height="10.3" fill="rgb(142,144,156)"/><rect x="60" y="0" width="10.3" height="10.3" fill="rgb(182,184,192)"/><rect x="70" y="0" width="10.3" height="10.3" fill="rgb(142,144,156)"/><rect x="80" y="0" width="10.3" height="10.3" fill="rgb(122,125,139)"/><rect x="90" y="0" width="10.3" height="10.3" fill="rgb(122,125,139)"/><rect x="10" y="10" width="10.3" height="10.3" fill="rgb(182,184,192)"/><rect x="20" y="10" width="10.3" height="10.3" fill="rgb(102,105,121)"/><rect x="40" y="10" width="10.3" height="10.3" fill="rgb(162,164,174)"/><rect x="50" y="10" width="10.3" height="10.3" fill="rgb(142,144,156)"/><rect x="60" y="10" width="10.3" height="10.3" fill="rgb(182,184,192)"/><rect x="70" y="10" width="10.3" height="10.3" fill="rgb(142,144,156)"/><rect x="80" y="10" width="10.3" height="10.3" fill="rgb(162,164,174)"/><rect x="90" y="10" width="10.3" height="10.3" fill="rgb(122,125,139)"/></svg>
<svg class="i" style="left:490.0px;top:592.0px;shape-rendering:crispEdges;" width="120" height="30" viewBox="0 0 120 30"><rect x="70" y="0" width="10.3" height="10.3" fill="rgb(162,164,174)"/><rect x="110" y="0" width="10.3" height="10.3" fill="rgb(182,184,192)"/><rect x="0" y="10" width="10.3" height="10.3" fill="rgb(162,164,174)"/><rect x="10" y="10" width="10.3" height="10.3" fill="rgb(102,105,121)"/><rect x="40" y="10" width="10.3" height="10.3" fill="rgb(182,184,192)"/><rect x="50" y="10" width="10.3" height="10.3" fill="rgb(162,164,174)"/><rect x="60" y="10" width="10.3" height="10.3" fill="rgb(142,144,156)"/><rect x="70" y="10" width="10.3" height="10.3" fill="rgb(182,184,192)"/><rect x="110" y="10" width="10.3" height="10.3" fill="rgb(182,184,192)"/><rect x="90" y="20" width="10.3" height="10.3" fill="rgb(162,164,174)"/></svg>
<svg class="i" style="left:490.0px;top:652.0px;shape-rendering:crispEdges;" width="90" height="30" viewBox="0 0 90 30"><rect x="0" y="0" width="10.3" height="10.3" fill="rgb(182,184,192)"/><rect x="10" y="0" width="10.3" height="10.3" fill="rgb(182,184,192)"/><rect x="60" y="0" width="10.3" height="10.3" fill="rgb(102,105,121)"/><rect x="70" y="0" width="10.3" height="10.3" fill="rgb(182,184,192)"/><rect x="80" y="0" width="10.3" height="10.3" fill="rgb(122,125,139)"/><rect x="30" y="10" width="10.3" height="10.3" fill="rgb(122,125,139)"/><rect x="60" y="10" width="10.3" height="10.3" fill="rgb(122,125,139)"/><rect x="70" y="10" width="10.3" height="10.3" fill="rgb(202,203,210)"/><rect x="80" y="10" width="10.3" height="10.3" fill="rgb(142,144,156)"/><rect x="0" y="20" width="10.3" height="10.3" fill="rgb(62,66,85)"/><rect x="20" y="20" width="10.3" height="10.3" fill="rgb(82,85,103)"/><rect x="40" y="20" width="10.3" height="10.3" fill="rgb(122,125,139)"/><rect x="60" y="20" width="10.3" height="10.3" fill="rgb(142,144,156)"/><rect x="70" y="20" width="10.3" height="10.3" fill="rgb(122,125,139)"/><rect x="80" y="20" width="10.3" height="10.3" fill="rgb(182,184,192)"/></svg>
<svg class="i" style="left:490.0px;top:722.0px;shape-rendering:crispEdges;" width="90" height="30" viewBox="0 0 90 30"><rect x="0" y="0" width="10.3" height="10.3" fill="rgb(82,85,103)"/><rect x="20" y="0" width="10.3" height="10.3" fill="rgb(82,85,103)"/><rect x="30" y="0" width="10.3" height="10.3" fill="rgb(122,125,139)"/><rect x="40" y="0" width="10.3" height="10.3" fill="rgb(142,144,156)"/><rect x="60" y="0" width="10.3" height="10.3" fill="rgb(122,125,139)"/><rect x="80" y="0" width="10.3" height="10.3" fill="rgb(162,164,174)"/><rect x="30" y="10" width="10.3" height="10.3" fill="rgb(182,184,192)"/><rect x="40" y="10" width="10.3" height="10.3" fill="rgb(102,105,121)"/><rect x="60" y="10" width="10.3" height="10.3" fill="rgb(102,105,121)"/><rect x="70" y="10" width="10.3" height="10.3" fill="rgb(162,164,174)"/><rect x="80" y="10" width="10.3" height="10.3" fill="rgb(142,144,156)"/><rect x="60" y="20" width="10.3" height="10.3" fill="rgb(82,85,103)"/><rect x="80" y="20" width="10.3" height="10.3" fill="rgb(62,66,85)"/></svg>
<svg class="i" style="left:490.0px;top:782.0px;shape-rendering:crispEdges;" width="160" height="30" viewBox="0 0 160 30"><rect x="0" y="0" width="10.3" height="10.3" fill="rgb(202,203,210)"/><rect x="70" y="0" width="10.3" height="10.3" fill="rgb(162,164,174)"/><rect x="80" y="0" width="10.3" height="10.3" fill="rgb(142,144,156)"/><rect x="100" y="0" width="10.3" height="10.3" fill="rgb(162,164,174)"/><rect x="110" y="0" width="10.3" height="10.3" fill="rgb(122,125,139)"/><rect x="130" y="0" width="10.3" height="10.3" fill="rgb(122,125,139)"/><rect x="140" y="0" width="10.3" height="10.3" fill="rgb(202,203,210)"/><rect x="150" y="0" width="10.3" height="10.3" fill="rgb(162,164,174)"/><rect x="0" y="10" width="10.3" height="10.3" fill="rgb(202,203,210)"/><rect x="10" y="10" width="10.3" height="10.3" fill="rgb(202,203,210)"/><rect x="30" y="10" width="10.3" height="10.3" fill="rgb(162,164,174)"/><rect x="40" y="10" width="10.3" height="10.3" fill="rgb(142,144,156)"/><rect x="70" y="10" width="10.3" height="10.3" fill="rgb(182,184,192)"/><rect x="80" y="10" width="10.3" height="10.3" fill="rgb(162,164,174)"/><rect x="110" y="10" width="10.3" height="10.3" fill="rgb(142,144,156)"/><rect x="140" y="10" width="10.3" height="10.3" fill="rgb(182,184,192)"/><rect x="150" y="10" width="10.3" height="10.3" fill="rgb(102,105,121)"/><rect x="10" y="20" width="10.3" height="10.3" fill="rgb(202,203,210)"/><rect x="40" y="20" width="10.3" height="10.3" fill="rgb(122,125,139)"/><rect x="50" y="20" width="10.3" height="10.3" fill="rgb(162,164,174)"/><rect x="60" y="20" width="10.3" height="10.3" fill="rgb(162,164,174)"/><rect x="70" y="20" width="10.3" height="10.3" fill="rgb(162,164,174)"/><rect x="80" y="20" width="10.3" height="10.3" fill="rgb(142,144,156)"/><rect x="130" y="20" width="10.3" height="10.3" fill="rgb(202,203,210)"/><rect x="150" y="20" width="10.3" height="10.3" fill="rgb(182,184,192)"/></svg>
<svg class="i" style="left:490.0px;top:842.0px;shape-rendering:crispEdges;" width="70" height="30" viewBox="0 0 70 30"><rect x="0" y="0" width="10.3" height="10.3" fill="rgb(82,85,103)"/><rect x="30" y="0" width="10.3" height="10.3" fill="rgb(82,85,103)"/><rect x="60" y="0" width="10.3" height="10.3" fill="rgb(82,85,103)"/><rect x="0" y="10" width="10.3" height="10.3" fill="rgb(142,144,156)"/><rect x="30" y="10" width="10.3" height="10.3" fill="rgb(162,164,174)"/><rect x="60" y="10" width="10.3" height="10.3" fill="rgb(182,184,192)"/><rect x="0" y="20" width="10.3" height="10.3" fill="rgb(142,144,156)"/><rect x="30" y="20" width="10.3" height="10.3" fill="rgb(162,164,174)"/><rect x="60" y="20" width="10.3" height="10.3" fill="rgb(182,184,192)"/></svg>
<svg class="i" style="left:490.0px;top:912.0px;shape-rendering:crispEdges;" width="30" height="20" viewBox="0 0 30 20"><rect x="0" y="0" width="10.3" height="10.3" fill="rgb(82,85,103)"/><rect x="0" y="10" width="10.3" height="10.3" fill="rgb(82,85,103)"/><rect x="10" y="10" width="10.3" height="10.3" fill="rgb(162,164,174)"/><rect x="20" y="10" width="10.3" height="10.3" fill="rgb(102,105,121)"/></svg>
<div class="r" style="left:489.0px;top:931.6px;width:5.5px;height:1.6px;background:#b9bbc6;"></div>
<div class="r" style="left:499.0px;top:931.6px;width:5.5px;height:1.6px;background:#b9bbc6;"></div>
<div class="r" style="left:508.0px;top:931.6px;width:5.5px;height:1.6px;background:#b9bbc6;"></div>
<div class="r" style="left:515.0px;top:931.6px;width:5.5px;height:1.6px;background:#b9bbc6;"></div>
<svg class="i" style="left:490.0px;top:982.0px;shape-rendering:crispEdges;" width="70" height="9.8" viewBox="0 0 70 9.8"><rect x="0" y="0" width="10.3" height="10.1" fill="rgb(96,100,120)"/><rect x="10" y="0" width="10.3" height="10.1" fill="rgb(123,126,144)"/><rect x="20" y="0" width="10.3" height="10.1" fill="rgb(109,113,132)"/><rect x="30" y="0" width="10.3" height="10.1" fill="rgb(96,100,120)"/><rect x="40" y="0" width="10.3" height="10.1" fill="rgb(136,140,157)"/><rect x="50" y="0" width="10.3" height="10.1" fill="rgb(123,126,144)"/><rect x="60" y="0" width="10.3" height="10.1" fill="rgb(96,100,120)"/></svg>
<svg class="i" style="left:490.0px;top:991.8px;shape-rendering:crispEdges;" width="70" height="3.6" viewBox="0 0 70 3.6"><rect x="0" y="0" width="10.3" height="3.9" fill="rgb(123,126,144)"/><rect x="10" y="0" width="10.3" height="3.9" fill="rgb(150,153,169)"/><rect x="20" y="0" width="10.3" height="3.9" fill="rgb(136,140,157)"/><rect x="30" y="0" width="10.3" height="3.9" fill="rgb(109,113,132)"/><rect x="40" y="0" width="10.3" height="3.9" fill="rgb(163,166,181)"/><rect x="50" y="0" width="10.3" height="3.9" fill="rgb(150,153,169)"/><rect x="60" y="0" width="10.3" height="3.9" fill="rgb(123,126,144)"/></svg>
<div class="r" style="left:488.4px;top:995.0px;width:7.4px;height:2.2px;background:#d6d8e0;border-radius:1px;"></div>
<div class="r" style="left:496.6px;top:996.4px;width:2.0px;height:1.8px;background:#d6d8e0;"></div>
<div class="r" style="left:498.6px;top:995.0px;width:7.4px;height:2.2px;background:#d6d8e0;border-radius:1px;"></div>
<div class="r" style="left:506.8px;top:996.4px;width:2.0px;height:1.8px;background:#d6d8e0;"></div>
<div class="r" style="left:508.8px;top:995.0px;width:7.4px;height:2.2px;background:#d6d8e0;border-radius:1px;"></div>
<div class="r" style="left:517.0px;top:996.4px;width:2.0px;height:1.8px;background:#d6d8e0;"></div>
<div class="r" style="left:519.0px;top:995.0px;width:7.4px;height:2.2px;background:#d6d8e0;border-radius:1px;"></div>
<div class="r" style="left:527.2px;top:996.4px;width:2.0px;height:1.8px;background:#d6d8e0;"></div>
<div class="r" style="left:529.2px;top:995.0px;width:7.4px;height:2.2px;background:#d6d8e0;border-radius:1px;"></div>
<div class="r" style="left:537.4px;top:996.4px;width:2.0px;height:1.8px;background:#d6d8e0;"></div>
<div class="r" style="left:539.4px;top:995.0px;width:7.4px;height:2.2px;background:#d6d8e0;border-radius:1px;"></div>
<div class="r" style="left:547.6px;top:996.4px;width:2.0px;height:1.8px;background:#d6d8e0;"></div>
<div class="r" style="left:549.6px;top:995.0px;width:7.4px;height:2.2px;background:#d6d8e0;border-radius:1px;"></div>
<div class="r" style="left:557.8px;top:996.4px;width:2.0px;height:1.8px;background:#d6d8e0;"></div>
<div class="r" style="left:489.0px;top:1040.0px;width:3.0px;height:2.0px;background:#c3c5cf;"></div>
<div class="r" style="left:527.0px;top:1040.0px;width:3.0px;height:2.0px;background:#c3c5cf;"></div>
<div class="r" style="left:568.0px;top:1040.0px;width:3.0px;height:2.0px;background:#c3c5cf;"></div>
<div class="r" style="left:580.0px;top:1040.0px;width:3.0px;height:2.0px;background:#c3c5cf;"></div>
<div class="r" style="left:599.0px;top:1040.0px;width:3.0px;height:2.0px;background:#c3c5cf;"></div>
<div class="r" style="left:610.0px;top:1040.0px;width:3.0px;height:2.0px;background:#c3c5cf;"></div>
<div class="r" style="left:640.0px;top:1040.0px;width:3.0px;height:2.0px;background:#c3c5cf;"></div>
<div class="r" style="left:664.0px;top:1040.0px;width:3.0px;height:2.0px;background:#c3c5cf;"></div>
<svg class="i" style="left:860.4px;top:973.4px;" width="28" height="29.6" viewBox="0 0 28 29.6"><rect class="s" x="1.2" y="1.2" width="18.6" height="20" rx="4.2" stroke="#cdcfd8" stroke-width="2.3"/><path class="s" d="M23 8.6Q26.6 9.4 26.6 13V23.6Q26.6 28.2 22 28.2H13.6Q10.4 28.2 9.4 25" stroke="#cdcfd8" stroke-width="2.3"/><path class="s" d="M6.2 7.6H14.8M10.5 7.6V15.6" stroke="#cdcfd8" stroke-width="2.2" style="stroke-linecap:butt"/></svg>
<div class="r" style="left:911.4px;top:974.7px;width:4.6px;height:4.6px;background:#d6d8e0;border-radius:50%;"></div>
<div class="r" style="left:911.4px;top:985.1px;width:4.6px;height:4.6px;background:#d6d8e0;border-radius:50%;"></div>
<div class="r" style="left:911.4px;top:995.5px;width:4.6px;height:4.6px;background:#d6d8e0;border-radius:50%;"></div>
<!-- tab bar -->
<div class="r" style="left:944.0px;top:85.5px;width:1914.0px;height:72.5px;background:#202333;"></div>
<div class="r" style="left:944.0px;top:85.5px;width:216.0px;height:72.5px;background:#2a2e43;"></div>
<div class="r" style="left:1158.6px;top:90.0px;width:1.5px;height:68.0px;background:#3c4157;"></div>
<div class="r" style="left:944.0px;top:85.6px;width:216.0px;height:4.2px;background:#2f75ff;"></div>
<div class="r" style="left:967.8px;top:107.8px;width:32.5px;height:32.6px;background:#659efa;"><span class="t" style="left:4.6px;top:7.8px;font-size:19.6px;color:#243465;-webkit-text-stroke:0;">Fs</span></div>
<svg class="i" style="left:1020.0px;top:122.3px;shape-rendering:crispEdges;" width="60" height="9.8" viewBox="0 0 60 9.8"><rect x="0" y="0" width="10.3" height="10.1" fill="rgb(105,108,124)"/><rect x="10" y="0" width="10.3" height="10.1" fill="rgb(232,233,238)"/><rect x="20" y="0" width="10.3" height="10.1" fill="rgb(190,191,200)"/><rect x="30" y="0" width="10.3" height="10.1" fill="rgb(232,233,238)"/><rect x="40" y="0" width="10.3" height="10.1" fill="rgb(211,212,219)"/><rect x="50" y="0" width="10.3" height="10.1" fill="rgb(84,88,105)"/></svg>
<div class="r" style="left:1075.0px;top:122.3px;width:1.5px;height:9.8px;background:#2a2e43;"></div>
<div class="t" style="left:1075.8px;top:114.3px;font-size:23.0px;color:#ffffff;font-weight:normal;-webkit-text-stroke:0.5px #fff;">a</div>
<svg class="i" style="left:1115.4px;top:117.1px;" width="17" height="17.8" viewBox="0 0 17 17.8"><path class="s" d="M1 1L16 16.8M16 1L1 16.8" stroke="#dcdee6" stroke-width="2" style="stroke-linecap:butt"/></svg>
<div class="r" style="left:2734.0px;top:113.4px;width:25.0px;height:4.0px;background:#d0d2da;"></div>
<div class="r" style="left:2734.0px;top:121.5px;width:25.0px;height:4.0px;background:#d0d2da;"></div>
<div class="r" style="left:2734.0px;top:129.6px;width:25.0px;height:4.0px;background:#d0d2da;"></div>
<div class="r" style="left:2788.4px;top:102.6px;width:1.5px;height:38.6px;background:#3a3f55;"></div>
<svg class="i" style="left:2813.6px;top:108.8px;" width="29" height="29.4" viewBox="0 0 29 29.4"><path class="s" d="M14.1 0.2V6M14.1 13V17.2M14.1 24.8V29" stroke="#d0d2da" stroke-width="3.2" style="stroke-linecap:butt"/><path class="s" d="M5.5 7.2H22.6L26.2 9.5L22.6 11.8H5.5Z" stroke="#d0d2da" stroke-width="2.7" style="stroke-linejoin:miter"/><path class="s" d="M24.4 18.3H5.8L2.2 21L5.8 23.7H24.4Z" stroke="#d0d2da" stroke-width="2.7" style="stroke-linejoin:miter"/></svg>
<!-- toolbar -->
<div class="r" style="left:944.0px;top:157.8px;width:1914.0px;height:68.0px;background:linear-gradient(180deg,#454b60 0%,#434960 55%,#3f445a 100%);"></div>
<svg class="i" style="left:970.0px;top:177.6px;" width="28" height="28.2" viewBox="0 0 28 28.2"><path class="s" d="M1.4 1.4H19.4L26.4 8.4V26.8H1.4Z" stroke="#cccdd4" stroke-width="3.1" style="stroke-linejoin:miter"/><path class="s" d="M9.6 26.4V18.4H17.6V26.4" stroke="#cccdd4" stroke-width="3.1" style="stroke-linejoin:miter;stroke-linecap:butt"/><rect x="11.4" y="6.4" width="4.6" height="5.2" fill="#cccdd4"/></svg>
<div class="t" style="left:1007.2px;top:180.7px;font-size:24.2px;color:#cccdd4;font-weight:normal;-webkit-text-stroke:0.35px #cccdd4;letter-spacing:-0.3px;">Save Task</div>
<svg class="i" style="left:1148.0px;top:175.8px;" width="33.4" height="32.6" viewBox="0 0 33.4 32.6"><rect class="s" x="1.4" y="1.4" width="30.4" height="20.4" stroke="#cccdd4" stroke-width="3.1" style="stroke-linejoin:miter"/><path d="M14 7.4L21 11.7L14 16Z" fill="#cccdd4"/><path class="s" d="M0.6 28.6H33M7.6 25.4V32.4" stroke="#cccdd4" stroke-width="3.1" style="stroke-linecap:butt"/></svg>
<div class="t" style="left:1188.4px;top:180.7px;font-size:24.2px;color:#cccdd4;font-weight:normal;-webkit-text-stroke:0.35px #cccdd4;letter-spacing:0px;">Precompile</div>
<svg class="i" style="left:1341.0px;top:175.6px;" width="34" height="33" viewBox="0 0 34 33"><path class="s" d="M4.8 0V7M4.8 14.4V32.6M16.6 0V15.4M16.6 23V32.6M28.2 0V9.6M28.2 17.2V32.6" stroke="#cccdd4" stroke-width="3.3" style="stroke-linecap:butt"/><rect class="s" x="1.6" y="7.4" width="6.4" height="6.4" stroke="#cccdd4" stroke-width="3.2" style="stroke-linejoin:miter"/><rect class="s" x="13.4" y="15.8" width="6.4" height="6.4" stroke="#cccdd4" stroke-width="3.2" style="stroke-linejoin:miter"/><rect class="s" x="25" y="10.2" width="6.4" height="6.4" stroke="#cccdd4" stroke-width="3.2" style="stroke-linejoin:miter"/></svg>
<div class="t" style="left:1381.4px;top:180.7px;font-size:24.2px;color:#cccdd4;font-weight:normal;-webkit-text-stroke:0.35px #cccdd4;letter-spacing:-0.1px;">Debugging</div>
<div class="r" style="left:1529.3px;top:170.0px;width:1.5px;height:40.0px;background:#666b82;"></div>
<svg class="i" style="left:1562.8px;top:176.0px;" width="34" height="32.6" viewBox="0 0 34 32.6"><path class="s" d="M17 1.8L31 16H24.4V25.6H9.6V16H3Z" stroke="#cccdd4" stroke-width="3" style="stroke-linejoin:miter"/><path class="s" d="M3.6 31H30.4" stroke="#cccdd4" stroke-width="3.1" style="stroke-linecap:butt"/></svg>
<div class="t" style="left:1604.4px;top:180.7px;font-size:24.2px;color:#cccdd4;font-weight:normal;-webkit-text-stroke:0.35px #cccdd4;letter-spacing:-0.1px;">Submit</div>
<svg class="i" style="left:1712.8px;top:175.6px;" width="33.4" height="32.8" viewBox="0 0 33.4 32.8"><rect class="s" x="1.4" y="1.4" width="30.6" height="24.2" stroke="#cccdd4" stroke-width="3.1" style="stroke-linejoin:miter"/><path class="s" d="M11.4 8.6L7.2 13L11.4 17.4M22 8.6L26.2 13L22 17.4M18.4 7.4L15 18.6" stroke="#cccdd4" stroke-width="2.2" style="stroke-linejoin:miter;stroke-linecap:butt"/><path class="s" d="M4.4 31.2H29" stroke="#cccdd4" stroke-width="3.1" style="stroke-linecap:butt"/></svg>
<div class="t" style="left:1753.6px;top:180.7px;font-size:24.2px;color:#cccdd4;font-weight:normal;-webkit-text-stroke:0.35px #cccdd4;letter-spacing:-0.4px;">Test</div>
<svg class="i" style="left:1828.4px;top:175.6px;" width="44" height="33.4" viewBox="0 0 44 33.4"><path class="s" d="M15.4 30.8H10.2A7.7 7.7 0 0 1 9 15.5A11.2 11.2 0 1 1 31 12.6L32.4 14.6A8 8 0 1 1 35 30.8H24.4" stroke="#cccdd4" stroke-width="3" style="stroke-linecap:butt"/><path class="s" d="M19.6 33.2V15M12 22.4L19.6 14L27.2 22.4" stroke="#cccdd4" stroke-width="3.2" style="stroke-linecap:butt;stroke-linejoin:miter"/></svg>
<div class="t" style="left:1878.8px;top:180.7px;font-size:24.2px;color:#cccdd4;font-weight:normal;-webkit-text-stroke:0.35px #cccdd4;letter-spacing:0px;">Publish</div>
<svg class="i" style="left:1991.0px;top:176.2px;" width="34" height="34" viewBox="0 0 34 34"><path class="s" d="M8.5 2.9 L14.0 8.5 L8.8 13.7 L3.2 8.2 A10.7 10.7 0 0 0 18.2 22.0 L26.2 30.1 L30.3 26.0 L22.3 17.9 A10.7 10.7 0 0 0 8.5 2.9Z" stroke="#8a8fa2" stroke-width="3" style="stroke-linejoin:miter"/></svg>
<div class="t" style="left:2030.0px;top:180.7px;font-size:24.2px;color:#8a8fa2;font-weight:normal;-webkit-text-stroke:0.35px #8a8fa2;letter-spacing:0px;">Perform O&amp;M</div>
<div class="r" style="left:2208.0px;top:170.0px;width:1.5px;height:40.0px;background:#666b82;"></div>
<svg class="i" style="left:2241.2px;top:176.0px;" width="33" height="32.6" viewBox="0 0 33 32.6"><path class="s" d="M10.6 8.2V1.4H22V8.2" stroke="#cccdd4" stroke-width="3.1" style="stroke-linejoin:miter;stroke-linecap:butt"/><rect class="s" x="1.4" y="8.6" width="30" height="8.6" stroke="#cccdd4" stroke-width="3.1" style="stroke-linejoin:miter"/><path class="s" d="M5 17.6V31H28V17.6" stroke="#cccdd4" stroke-width="3.1" style="stroke-linejoin:miter;stroke-linecap:butt"/><path class="s" d="M12.6 20.6V27M20.6 20.6V27" stroke="#cccdd4" stroke-width="3.1" style="stroke-linecap:butt"/></svg>
<div class="t" style="left:2281.6px;top:180.7px;font-size:24.2px;color:#cccdd4;font-weight:normal;-webkit-text-stroke:0.35px #cccdd4;letter-spacing:-0.2px;">Format</div>
<svg class="i" style="left:2392.0px;top:177.0px;" width="28" height="30" viewBox="0 0 28 30"><path class="s" d="M17.6 6.2A11.6 11.6 0 1 0 23.2 10.6" stroke="#cccdd4" stroke-width="2.9"/><path d="M14 1L21.4 5.2L14.4 10Z" fill="#cccdd4"/></svg>
<svg class="i" style="left:2457.2px;top:177.8px;" width="25" height="28.6" viewBox="0 0 25 28.6"><path class="s" d="M6.4 12.4V8Q6.4 1.4 12.6 1.4Q18.8 1.4 19 8" stroke="#8a8fa2" stroke-width="3" style="stroke-linecap:butt"/><rect class="s" x="1.4" y="12.6" width="22.2" height="14.4" stroke="#8a8fa2" stroke-width="3" style="stroke-linejoin:miter"/><circle cx="12.5" cy="18.6" r="2" fill="#8a8fa2"/><rect x="11.5" y="19" width="2" height="4.2" fill="#8a8fa2"/></svg>
<svg class="i" style="left:2522.0px;top:176.4px;" width="24.6" height="31.4" viewBox="0 0 24.6 31.4"><path class="s" d="M12.3 29.6Q1.4 20.4 1.4 12.4Q1.4 1.4 12.3 1.4Q23.2 1.4 23.2 12.4Q23.2 20.4 12.3 29.6Z" stroke="#cccdd4" stroke-width="3"/><circle class="s" cx="12.3" cy="12.2" r="4.4" stroke="#cccdd4" stroke-width="3"/></svg>
<svg class="i" style="left:2583.6px;top:179.6px;" width="28.6" height="28.6" viewBox="0 0 28.6 28.6"><circle class="s" cx="14.3" cy="14.3" r="12.9" stroke="#cccdd4" stroke-width="3"/><rect x="6.3" y="12.6" width="3.6" height="3.6" fill="#cccdd4"/><rect x="12.5" y="12.6" width="3.6" height="3.6" fill="#cccdd4"/><rect x="18.7" y="12.6" width="3.6" height="3.6" fill="#cccdd4"/></svg>
<!-- code editor -->
<div class="r" style="left:944.0px;top:225.6px;width:410.0px;height:817.0px;background:#040921;"></div>
<div class="r" style="left:944.0px;top:225.6px;width:124.0px;height:817.0px;background:#030720;"></div>
<div class="r" style="left:1068.0px;top:226.0px;width:286.0px;height:42.2px;background:#373e58;"></div>
<div class="r" style="left:1068.0px;top:268.0px;width:1.2px;height:775.0px;background:#1c2138;"></div>
<div class="clip" style="left:944px;top:225.6px;width:408px;height:816.4px;font-family:'DejaVu Sans Mono','Liberation Mono',monospace;font-size:27.9px;-webkit-text-stroke:0.25px;">
<div class="t" style="left:0;width:91.4px;text-align:right;top:0.1px;line-height:42px;color:#c9cbd0;">1</div>
<div class="t" style="left:124.6px;top:0.1px;line-height:42px;color:#fff;white-space:pre;"><span style="color:#4aa5f4">create temporary</span></div>
<div class="t" style="left:0;width:91.4px;text-align:right;top:42.1px;line-height:42px;color:#8b8d94;">2</div>
<div class="t" style="left:124.6px;top:42.1px;line-height:42px;color:#fff;white-space:pre;">    id <span style="color:#4aa5f4">bigint</span>,</div>
<div class="t" style="left:0;width:91.4px;text-align:right;top:84.1px;line-height:42px;color:#8b8d94;">3</div>
<div class="t" style="left:124.6px;top:84.1px;line-height:42px;color:#fff;white-space:pre;">    <span style="color:#4aa5f4">name varchar</span></div>
<div class="t" style="left:0;width:91.4px;text-align:right;top:126.1px;line-height:42px;color:#8b8d94;">4</div>
<div class="t" style="left:124.6px;top:126.1px;line-height:42px;color:#fff;white-space:pre;">) <span style="color:#4aa5f4">with</span>(</div>
<div class="t" style="left:0;width:91.4px;text-align:right;top:168.1px;line-height:42px;color:#8b8d94;">5</div>
<div class="t" style="left:124.6px;top:168.1px;line-height:42px;color:#fff;white-space:pre;">    <span style="color:#e9b00f">'connector'</span> <span style="color:#c9cbe8">=</span></div>
<div class="t" style="left:0;width:91.4px;text-align:right;top:210.1px;line-height:42px;color:#8b8d94;">6</div>
<div class="t" style="left:124.6px;top:210.1px;line-height:42px;color:#fff;white-space:pre;">    <span style="color:#e9b00f">'number-of-ro</span></div>
<div class="t" style="left:0;width:91.4px;text-align:right;top:252.1px;line-height:42px;color:#8b8d94;">7</div>
<div class="t" style="left:124.6px;top:252.1px;line-height:42px;color:#fff;white-space:pre;">);</div>
<div class="t" style="left:0;width:91.4px;text-align:right;top:294.1px;line-height:42px;color:#8b8d94;">8</div>
<div class="t" style="left:124.6px;top:294.1px;line-height:42px;color:#fff;white-space:pre;"><span style="color:#4aa5f4">create temporary</span></div>
<div class="t" style="left:0;width:91.4px;text-align:right;top:336.1px;line-height:42px;color:#8b8d94;">9</div>
<div class="t" style="left:124.6px;top:336.1px;line-height:42px;color:#fff;white-space:pre;">    id <span style="color:#4aa5f4">bigint</span>,</div>
<div class="t" style="left:0;width:91.4px;text-align:right;top:378.1px;line-height:42px;color:#8b8d94;">10</div>
<div class="t" style="left:124.6px;top:378.1px;line-height:42px;color:#fff;white-space:pre;">    <span style="color:#4aa5f4">name varchar</span></div>
<div class="t" style="left:0;width:91.4px;text-align:right;top:420.1px;line-height:42px;color:#8b8d94;">11</div>
<div class="t" style="left:124.6px;top:420.1px;line-height:42px;color:#fff;white-space:pre;">) <span style="color:#4aa5f4">with</span>(</div>
<div class="t" style="left:0;width:91.4px;text-align:right;top:462.1px;line-height:42px;color:#8b8d94;">12</div>
<div class="t" style="left:124.6px;top:462.1px;line-height:42px;color:#fff;white-space:pre;">    <span style="color:#e9b00f">'connector'</span> <span style="color:#c9cbe8">=</span></div>
<div class="t" style="left:0;width:91.4px;text-align:right;top:504.1px;line-height:42px;color:#8b8d94;">13</div>
<div class="t" style="left:124.6px;top:504.1px;line-height:42px;color:#fff;white-space:pre;">    <span style="color:#e9b00f">'number-of-ro</span></div>
<div class="t" style="left:0;width:91.4px;text-align:right;top:546.1px;line-height:42px;color:#8b8d94;">14</div>
<div class="t" style="left:124.6px;top:546.1px;line-height:42px;color:#fff;white-space:pre;">);</div>
<div class="t" style="left:0;width:91.4px;text-align:right;top:588.1px;line-height:42px;color:#8b8d94;">15</div>
<div class="t" style="left:0;width:91.4px;text-align:right;top:630.1px;line-height:42px;color:#8b8d94;">16</div>
<div class="t" style="left:0;width:91.4px;text-align:right;top:672.1px;line-height:42px;color:#8b8d94;">17</div>
<div class="t" style="left:124.6px;top:672.1px;line-height:42px;color:#fff;white-space:pre;"><span style="color:#4aa5f4">create temporary</span></div>
<div class="t" style="left:0;width:91.4px;text-align:right;top:714.1px;line-height:42px;color:#8b8d94;">18</div>
<div class="t" style="left:124.6px;top:714.1px;line-height:42px;color:#fff;white-space:pre;">    id <span style="color:#4aa5f4">bigint</span>,</div>
<div class="t" style="left:0;width:91.4px;text-align:right;top:756.1px;line-height:42px;color:#8b8d94;">19</div>
<div class="t" style="left:124.6px;top:756.1px;line-height:42px;color:#fff;white-space:pre;">    <span style="color:#4aa5f4">name varchar</span></div>
<div class="t" style="left:0;width:91.4px;text-align:right;top:798.1px;line-height:42px;color:#8b8d94;">20</div>
<div class="t" style="left:124.6px;top:798.1px;line-height:42px;color:#fff;white-space:pre;">) <span style="color:#4aa5f4">with</span>(</div>
<div class="r" style="left:125.8px;top:41.7px;width:1.6px;height:84.0px;background:#444960;"></div>
<div class="r" style="left:125.8px;top:167.7px;width:1.6px;height:84.0px;background:#444960;"></div>
<div class="r" style="left:125.8px;top:335.7px;width:1.6px;height:84.0px;background:#444960;"></div>
<div class="r" style="left:125.8px;top:461.7px;width:1.6px;height:84.0px;background:#444960;"></div>
<div class="r" style="left:125.8px;top:713.7px;width:1.6px;height:84.0px;background:#444960;"></div>
</div>
<div class="r" style="left:943px;top:681.5px;width:21px;height:159px;background:#2a2e43;border:1.5px solid #3e4359;border-left:none;border-radius:0 19px 19px 0;box-sizing:border-box;"></div>
<svg class="i" style="left:953.4px;top:753.2px;" width="10" height="15.6" viewBox="0 0 10 15.6"><path d="M10 0L0.4 7.8L10 15.6Z" fill="#c6c8d0"/></svg>
<!-- version details panel -->
<div class="r" style="left:1352.0px;top:226.0px;width:1442.4px;height:817.0px;background:#ffffff;border-radius:3px 0 0 0;box-shadow:-1.5px -1px 0 0 #363b52,-3px 0 8px rgba(0,0,0,0.3);"></div>
<div class="t" style="left:1392.2px;top:269.6px;font-size:26.8px;color:#262626;font-weight:bold;letter-spacing:-0.1px;">Version Details</div>
<svg class="i" style="left:2757.0px;top:273.4px;" width="18.4" height="19" viewBox="0 0 18.4 19"><path class="s" d="M1 1L17.4 18M17.4 1L1 18" stroke="#7a7a7a" stroke-width="2" style="stroke-linecap:butt"/></svg>
<div class="r" style="left:1352.0px;top:338.1px;width:1442.4px;height:1.8px;background:#e5e5e5;"></div>
<div class="r" style="left:1392.4px;top:380.0px;width:1342.0px;height:79.0px;background:#f8f8f9;border-radius:8px 8px 0 0;"></div>
<div class="r" style="left:1392.4px;top:458.4px;width:1342.0px;height:1.6px;background:#ebebeb;"></div>
<div class="r" style="left:1392.4px;top:538.2px;width:1342.0px;height:1.6px;background:#ebebeb;"></div>
<div class="r" style="left:1392.4px;top:617.8px;width:1342.0px;height:1.6px;background:#ebebeb;"></div>
<div class="t" style="left:1422.2px;top:408.1px;font-size:24.2px;color:#222222;font-weight:normal;letter-spacing:-0.2px;">Version Number</div>
<div class="t" style="left:1666.0px;top:408.1px;font-size:24.2px;color:#222222;font-weight:normal;">Task Mode</div>
<div class="t" style="left:1930.8px;top:408.1px;font-size:24.2px;color:#222222;font-weight:normal;letter-spacing:0.3px;">Modified by</div>
<div class="t" style="left:2131.0px;top:408.1px;font-size:24.2px;color:#222222;font-weight:normal;">Created at</div>
<div class="clip" style="left:2440px;top:380px;width:70px;height:240px;">
<div class="t" style="left:5.8px;top:28.1px;font-size:24.2px;color:#222222;font-weight:normal;">Status</div>
<div class="r" style="left:7.2px;top:106.4px;width:25.6px;height:25.6px;border-radius:50%;background:#15be50;"></div>
<svg class="i" style="left:7.2px;top:106.4px;" width="25.6" height="25.6" viewBox="0 0 25.6 25.6"><path class="s" d="M7 13.2L11.4 17.4L18.8 9.4" stroke="#fff" stroke-width="3" style="stroke-linecap:butt;stroke-linejoin:miter"/></svg>
<div class="t" style="left:33.4px;top:108.0px;font-size:24.2px;color:#4f4f4f;font-weight:normal;">Sub</div>
<div class="r" style="left:7.2px;top:186.4px;width:25.6px;height:25.6px;border-radius:50%;background:#15be50;"></div>
<svg class="i" style="left:7.2px;top:186.4px;" width="25.6" height="25.6" viewBox="0 0 25.6 25.6"><path class="s" d="M7 13.2L11.4 17.4L18.8 9.4" stroke="#fff" stroke-width="3" style="stroke-linecap:butt;stroke-linejoin:miter"/></svg>
<div class="t" style="left:33.4px;top:188.0px;font-size:24.2px;color:#4f4f4f;font-weight:normal;">Sub</div>
</div>
<div class="t" style="left:1421.6px;top:488.0px;font-size:24.2px;color:#2e2e2e;font-weight:normal;">V2</div>
<div class="t" style="left:1665.2px;top:488.0px;font-size:24.2px;color:#505050;font-weight:normal;">Stream and Batch</div>
<div class="t" style="left:2131.0px;top:488.0px;font-size:24.2px;color:#505050;font-weight:normal;letter-spacing:-0.3px;">2024-09-23 14:26:32</div>
<div class="r" style="left:1907.0px;top:461.6px;width:170.0px;height:78.0px;background:#fdfdfd;"></div>
<svg class="i" style="left:1930.0px;top:492.0px;shape-rendering:crispEdges;" width="130" height="20" viewBox="0 0 130 20"><rect x="0" y="0" width="10.3" height="10.3" fill="rgb(83,83,83)"/><rect x="30" y="0" width="10.3" height="10.3" fill="rgb(62,62,62)"/><rect x="50" y="0" width="10.3" height="10.3" fill="rgb(83,83,83)"/><rect x="60" y="0" width="10.3" height="10.3" fill="rgb(148,148,148)"/><rect x="70" y="0" width="10.3" height="10.3" fill="rgb(212,212,212)"/><rect x="80" y="0" width="10.3" height="10.3" fill="rgb(105,105,105)"/><rect x="90" y="0" width="10.3" height="10.3" fill="rgb(234,234,234)"/><rect x="100" y="0" width="10.3" height="10.3" fill="rgb(105,105,105)"/><rect x="110" y="0" width="10.3" height="10.3" fill="rgb(126,126,126)"/><rect x="120" y="0" width="10.3" height="10.3" fill="rgb(105,105,105)"/><rect x="0" y="10" width="10.3" height="10.3" fill="rgb(169,169,169)"/><rect x="10" y="10" width="10.3" height="10.3" fill="rgb(191,191,191)"/><rect x="20" y="10" width="10.3" height="10.3" fill="rgb(105,105,105)"/><rect x="30" y="10" width="10.3" height="10.3" fill="rgb(83,83,83)"/><rect x="50" y="10" width="10.3" height="10.3" fill="rgb(83,83,83)"/><rect x="70" y="10" width="10.3" height="10.3" fill="rgb(212,212,212)"/><rect x="80" y="10" width="10.3" height="10.3" fill="rgb(148,148,148)"/><rect x="90" y="10" width="10.3" height="10.3" fill="rgb(234,234,234)"/><rect x="100" y="10" width="10.3" height="10.3" fill="rgb(169,169,169)"/><rect x="110" y="10" width="10.3" height="10.3" fill="rgb(191,191,191)"/><rect x="120" y="10" width="10.3" height="10.3" fill="rgb(169,169,169)"/></svg>
<div class="t" style="left:1421.6px;top:568.0px;font-size:24.2px;color:#2e2e2e;font-weight:normal;">V1</div>
<div class="t" style="left:1665.2px;top:568.0px;font-size:24.2px;color:#505050;font-weight:normal;">Stream and Batch</div>
<div class="t" style="left:2131.0px;top:568.0px;font-size:24.2px;color:#505050;font-weight:normal;letter-spacing:-0.3px;">2024-09-05 15:01:35</div>
<div class="r" style="left:1907.0px;top:541.6px;width:170.0px;height:78.0px;background:#fdfdfd;"></div>
<svg class="i" style="left:1930.0px;top:572.0px;shape-rendering:crispEdges;" width="130" height="20" viewBox="0 0 130 20"><rect x="0" y="0" width="10.3" height="10.3" fill="rgb(83,83,83)"/><rect x="30" y="0" width="10.3" height="10.3" fill="rgb(62,62,62)"/><rect x="50" y="0" width="10.3" height="10.3" fill="rgb(83,83,83)"/><rect x="60" y="0" width="10.3" height="10.3" fill="rgb(148,148,148)"/><rect x="70" y="0" width="10.3" height="10.3" fill="rgb(212,212,212)"/><rect x="80" y="0" width="10.3" height="10.3" fill="rgb(105,105,105)"/><rect x="90" y="0" width="10.3" height="10.3" fill="rgb(234,234,234)"/><rect x="100" y="0" width="10.3" height="10.3" fill="rgb(105,105,105)"/><rect x="110" y="0" width="10.3" height="10.3" fill="rgb(126,126,126)"/><rect x="120" y="0" width="10.3" height="10.3" fill="rgb(105,105,105)"/><rect x="0" y="10" width="10.3" height="10.3" fill="rgb(169,169,169)"/><rect x="10" y="10" width="10.3" height="10.3" fill="rgb(191,191,191)"/><rect x="20" y="10" width="10.3" height="10.3" fill="rgb(105,105,105)"/><rect x="30" y="10" width="10.3" height="10.3" fill="rgb(83,83,83)"/><rect x="50" y="10" width="10.3" height="10.3" fill="rgb(83,83,83)"/><rect x="70" y="10" width="10.3" height="10.3" fill="rgb(212,212,212)"/><rect x="80" y="10" width="10.3" height="10.3" fill="rgb(148,148,148)"/><rect x="90" y="10" width="10.3" height="10.3" fill="rgb(234,234,234)"/><rect x="100" y="10" width="10.3" height="10.3" fill="rgb(169,169,169)"/><rect x="110" y="10" width="10.3" height="10.3" fill="rgb(191,191,191)"/><rect x="120" y="10" width="10.3" height="10.3" fill="rgb(169,169,169)"/></svg>
<div class="r" style="left:2510.0px;top:380.0px;width:224.0px;height:79.0px;background:#f8f8f9;border-radius:0 8px 0 0;box-shadow:-5px 0 7px -2px rgba(0,0,0,0.13);"></div>
<div class="r" style="left:2510.0px;top:460.0px;width:224.0px;height:158.0px;background:#ffffff;box-shadow:-5px 0 7px -2px rgba(0,0,0,0.13);"></div>
<div class="r" style="left:2510.0px;top:458.4px;width:224.0px;height:1.6px;background:#ebebeb;"></div>
<div class="r" style="left:2510.0px;top:538.2px;width:224.0px;height:1.6px;background:#ebebeb;"></div>
<div class="r" style="left:2510.0px;top:617.8px;width:224.0px;height:1.6px;background:#ebebeb;"></div>
<div class="t" style="left:2541.6px;top:408.1px;font-size:24.2px;color:#222222;font-weight:normal;letter-spacing:0.15px;">Actions</div>
<svg class="i" style="left:2542.6px;top:485.2px;" width="25" height="26" viewBox="0 0 25 26"><path class="s" d="M9.4 24.6H1.3V1.3H16.6L22 6.6V10" stroke="#868686" stroke-width="2.3" style="stroke-linejoin:miter;stroke-linecap:butt"/><path class="s" d="M5.4 7.4H16.4M5.4 12.4H10.6M5.4 17.4H9.4" stroke="#868686" stroke-width="2.3" style="stroke-linecap:butt"/><circle class="s" cx="16.6" cy="17" r="4.7" stroke="#868686" stroke-width="2.3"/><path class="s" d="M20 20.6L24 24.8" stroke="#868686" stroke-width="2.3" style="stroke-linecap:butt"/></svg>
<svg class="i" style="left:2600.2px;top:484.8px;" width="27" height="26.6" viewBox="0 0 27 26.6"><rect class="s" x="1" y="4.6" width="8.6" height="17.4" stroke="#868686" stroke-width="1.9" style="stroke-linejoin:miter"/><rect class="s" x="17.4" y="4.6" width="8.6" height="17.4" stroke="#868686" stroke-width="1.9" style="stroke-linejoin:miter"/><path class="s" d="M13.5 0V26.6" stroke="#868686" stroke-width="1.9" style="stroke-linecap:butt"/></svg>
<svg class="i" style="left:2658.8px;top:484.6px;" width="25.4" height="26.8" viewBox="0 0 25.4 26.8"><path class="s" d="M8.2 4.8A10.6 10.6 0 1 1 2.6 10.6" stroke="#868686" stroke-width="2.4" style="stroke-linecap:butt"/><path d="M11.6 0.4L5.2 4.4L11.6 8.8Z" fill="#868686"/><path class="s" d="M12.4 9.4V15.4H17.4" stroke="#868686" stroke-width="2.8" style="stroke-linecap:butt;stroke-linejoin:miter"/></svg>
<svg class="i" style="left:2542.6px;top:565.2px;" width="25" height="26" viewBox="0 0 25 26"><path class="s" d="M9.4 24.6H1.3V1.3H16.6L22 6.6V10" stroke="#868686" stroke-width="2.3" style="stroke-linejoin:miter;stroke-linecap:butt"/><path class="s" d="M5.4 7.4H16.4M5.4 12.4H10.6M5.4 17.4H9.4" stroke="#868686" stroke-width="2.3" style="stroke-linecap:butt"/><circle class="s" cx="16.6" cy="17" r="4.7" stroke="#868686" stroke-width="2.3"/><path class="s" d="M20 20.6L24 24.8" stroke="#868686" stroke-width="2.3" style="stroke-linecap:butt"/></svg>
<svg class="i" style="left:2600.2px;top:564.8px;" width="27" height="26.6" viewBox="0 0 27 26.6"><rect class="s" x="1" y="4.6" width="8.6" height="17.4" stroke="#868686" stroke-width="1.9" style="stroke-linejoin:miter"/><rect class="s" x="17.4" y="4.6" width="8.6" height="17.4" stroke="#868686" stroke-width="1.9" style="stroke-linejoin:miter"/><path class="s" d="M13.5 0V26.6" stroke="#868686" stroke-width="1.9" style="stroke-linecap:butt"/></svg>
<svg class="i" style="left:2658.8px;top:564.6px;" width="25.4" height="26.8" viewBox="0 0 25.4 26.8"><path class="s" d="M8.2 4.8A10.6 10.6 0 1 1 2.6 10.6" stroke="#868686" stroke-width="2.4" style="stroke-linecap:butt"/><path d="M11.6 0.4L5.2 4.4L11.6 8.8Z" fill="#868686"/><path class="s" d="M12.4 9.4V15.4H17.4" stroke="#868686" stroke-width="2.8" style="stroke-linecap:butt;stroke-linejoin:miter"/></svg>
<div class="r" style="left:1396.0px;top:623.8px;width:1096.0px;height:10.0px;background:#d0d2e0;border-radius:5px;"></div>
<!-- right sidebar -->
<div class="r" style="left:2794.2px;top:225.6px;width:64.0px;height:817.0px;background:#2a2e43;"></div>
<div class="r" style="left:2793.4px;top:560.8px;width:65.0px;height:146.4px;background:#f4f5f9;"></div>
<div class="t" style="left:2830.6px;top:310.8px;font-size:24.2px;color:#b9bcc8;-webkit-text-stroke:0.3px;transform:translate(-50%,-50%) rotate(90deg);">Attributes</div>
<div class="t" style="left:2830.6px;top:479.6px;font-size:24.2px;color:#b9bcc8;-webkit-text-stroke:0.3px;transform:translate(-50%,-50%) rotate(90deg);">Configured</div>
<div class="t" style="left:2829.6px;top:640.0px;font-size:24.2px;color:#1f1f1f;-webkit-text-stroke:0.3px;transform:translate(-50%,-50%) rotate(90deg);">Versions</div>
<!-- annotation boxes and numbers -->
<div class="r" style="left:472.0px;top:4.0px;width:568.0px;height:82.0px;border:6px solid #ff6a00;box-sizing:border-box;"></div>
<div class="r" style="left:1051.0px;top:17.0px;width:50.0px;height:50.0px;border-radius:50%;background:#ff6a00;"></div>
<div class="t" style="left:1046.0px;top:26.2px;width:60px;text-align:center;font-size:33px;color:#fff;-webkit-text-stroke:0.45px #fff;">1</div>
<div class="r" style="left:16.2px;top:810.0px;width:270.0px;height:73.6px;border:6px solid #ff6a00;box-sizing:border-box;"></div>
<div class="r" style="left:286.9px;top:821.0px;width:50.0px;height:50.0px;border-radius:50%;background:#ff6a00;"></div>
<div class="t" style="left:281.9px;top:830.2px;width:60px;text-align:center;font-size:33px;color:#fff;-webkit-text-stroke:0.45px #fff;">2</div>
<div class="r" style="left:412.8px;top:946.4px;width:237.4px;height:79.6px;border:6px solid #ff6a00;box-sizing:border-box;"></div>
<div class="r" style="left:656.9px;top:971.1px;width:50.0px;height:50.0px;border-radius:50%;background:#ff6a00;"></div>
<div class="t" style="left:651.9px;top:980.3px;width:60px;text-align:center;font-size:33px;color:#fff;-webkit-text-stroke:0.45px #fff;">3</div>
<div class="r" style="left:2795.6px;top:570.0px;width:64.0px;height:137.2px;border:6.4px solid #ff6a00;box-sizing:border-box;"></div>
<div class="r" style="left:2798.9px;top:727.2px;width:50.0px;height:50.0px;border-radius:50%;background:#ff6a00;"></div>
<div class="t" style="left:2793.9px;top:736.4px;width:60px;text-align:center;font-size:33px;color:#fff;-webkit-text-stroke:0.45px #fff;">4</div>
<div class="r" style="left:1369.6px;top:237.8px;width:1416.4px;height:375.8px;border:6px solid #ff6a00;box-sizing:border-box;"></div>
<div class="r" style="left:2029.0px;top:288.9px;width:50.0px;height:50.0px;border-radius:50%;background:#ff6a00;"></div>
<div class="t" style="left:2024.0px;top:298.0px;width:60px;text-align:center;font-size:33px;color:#fff;-webkit-text-stroke:0.45px #fff;">5</div>
</div></body></html>
